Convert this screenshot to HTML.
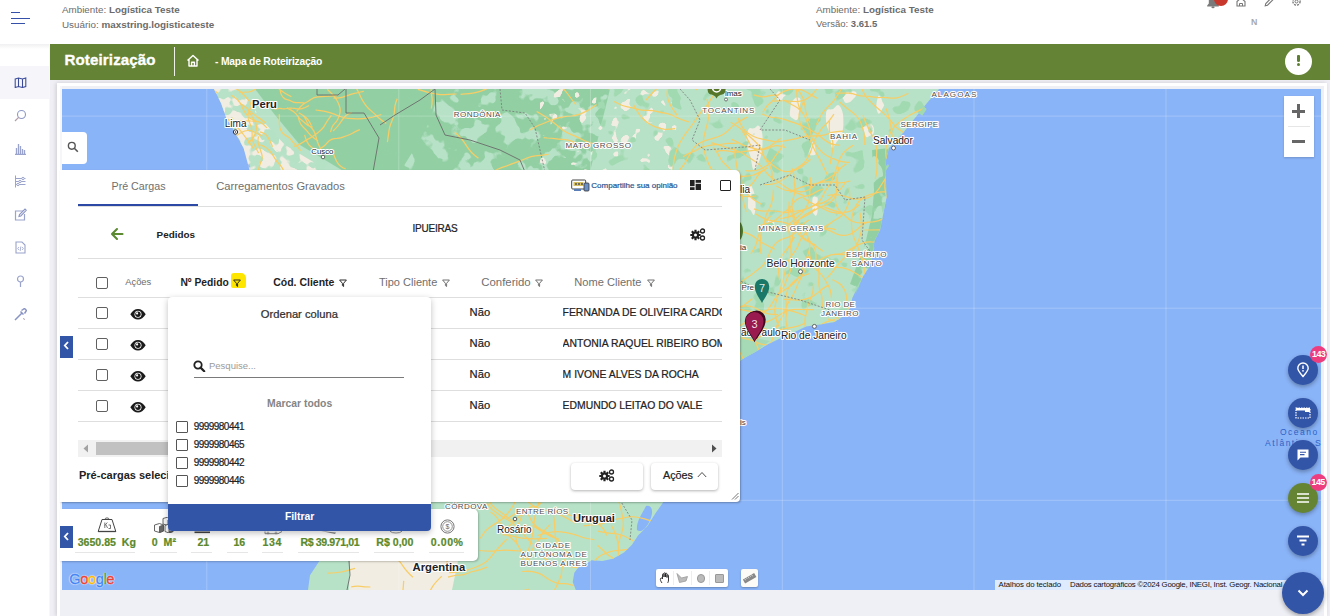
<!DOCTYPE html>
<html><head><meta charset="utf-8">
<style>
*{box-sizing:border-box;margin:0;padding:0}
html,body{width:1330px;height:616px;overflow:hidden;background:#fff;font-family:"Liberation Sans",sans-serif;position:relative}
.a{position:absolute}
.t{position:absolute;white-space:nowrap;line-height:1.15}
.b{font-weight:bold}
.hv{-webkit-text-stroke:0.22px #222}
</style></head><body>

<!-- HEADER -->
<div class="a" style="left:0;top:0;width:1330px;height:44px;background:#fff"></div>
<div class="a" style="left:11px;top:12px;width:9px;height:1.3px;background:#3450a8"></div>
<div class="a" style="left:11px;top:18px;width:19px;height:1.3px;background:#3450a8"></div>
<div class="a" style="left:11px;top:23px;width:14px;height:1.3px;background:#3450a8"></div>
<div class="t" style="left:62px;top:3.8px;font-size:9.82px;color:#6b6b6b">Ambiente: <b>Logística Teste</b></div>
<div class="t" style="left:62px;top:18.8px;font-size:9.87px;color:#6b6b6b">Usuário: <b>maxstring.logisticateste</b></div>
<div class="t" style="left:816px;top:3.8px;font-size:9.82px;color:#6b6b6b">Ambiente: <b>Logística Teste</b></div>
<div class="t" style="left:816px;top:18.8px;font-size:9.5px;color:#6b6b6b">Versão: <b>3.61.5</b></div>

<!-- SIDEBAR -->
<div class="a" style="left:0;top:44px;width:49px;height:572px;background:#fff"></div>
<div class="a" style="left:0;top:66px;width:49px;height:33px;background:#f5f5fa"></div>
<div class="a" style="left:0;top:44px;width:49px;height:5px;background:linear-gradient(#f0f0f2,#fff)"></div>
<div class="a" style="left:49px;top:44px;width:1px;height:572px;background:#f7f7f9"></div>

<!-- GREEN BAR -->
<div class="a" style="left:50px;top:44px;width:1280px;height:36px;background:#658335"></div>
<div class="t b" style="left:64.5px;top:50.8px;font-size:15.1px;letter-spacing:0.12px;color:#fff;-webkit-text-stroke:0.35px #fff">Roteirização</div>
<div class="a" style="left:174.2px;top:47px;width:1.2px;height:29px;background:#eef2e6"></div>
<div class="t b" style="left:215px;top:55.8px;font-size:10.3px;letter-spacing:-0.2px;color:#fff">- Mapa de Roteirização</div>

<!-- CONTENT BG -->
<div class="a" style="left:50px;top:80px;width:1280px;height:536px;background:#efeff5"></div>
<div class="a" style="left:57px;top:83px;width:1270px;height:533px;background:#fff;box-shadow:-1px 0 4px rgba(0,0,0,.15)"></div>
<div class="a" style="left:60px;top:86px;width:1264px;height:530px;background:#eff0f6"></div>
<div class="a" style="left:60px;top:86px;width:2px;height:504px;background:#f6f6f9"></div>

<!-- MAP -->
<div id="map" class="a" style="left:62px;top:89px;width:1259px;height:501px;background:#8ab4f8;overflow:hidden"><svg width="1259" height="501" viewBox="62 89 1259 501"><defs>
<filter id="nz1" color-interpolation-filters="sRGB" x="0" y="0" width="100%" height="100%" filterUnits="userSpaceOnUse"><feTurbulence type="fractalNoise" baseFrequency="0.05" numOctaves="3" seed="7" result="n"/><feColorMatrix in="n" type="matrix" values="0 0 0 0 0.573  0 0 0 0 0.816  0 0 0 0 0.639  18 0 0 0 -7.4" result="m"/><feComposite in="m" in2="SourceGraphic" operator="in"/></filter>
<filter id="nz2" color-interpolation-filters="sRGB" x="0" y="0" width="100%" height="100%" filterUnits="userSpaceOnUse"><feTurbulence type="fractalNoise" baseFrequency="0.09" numOctaves="2" seed="11" result="n"/><feColorMatrix in="n" type="matrix" values="0 0 0 0 0.949  0 0 0 0 0.929  0 0 0 0 0.886  24 0 0 0 -15.6" result="m"/><feComposite in="m" in2="SourceGraphic" operator="in"/></filter>
<filter id="nz3" color-interpolation-filters="sRGB" x="0" y="0" width="100%" height="100%" filterUnits="userSpaceOnUse"><feTurbulence type="fractalNoise" baseFrequency="0.07" numOctaves="2" seed="23" result="n"/><feColorMatrix in="n" type="matrix" values="0 0 0 0 0.71  0 0 0 0 0.882  0 0 0 0 0.77  18 0 0 0 -9.6" result="m"/><feComposite in="m" in2="SourceGraphic" operator="in"/></filter>
<filter id="nz4" color-interpolation-filters="sRGB" x="0" y="0" width="100%" height="100%" filterUnits="userSpaceOnUse"><feTurbulence type="fractalNoise" baseFrequency="0.06" numOctaves="2" seed="5" result="n"/><feColorMatrix in="n" type="matrix" values="0 0 0 0 0.63  0 0 0 0 0.85  0 0 0 0 0.69  18 0 0 0 -11.3" result="m"/><feComposite in="m" in2="SourceGraphic" operator="in"/></filter>
<filter id="nz5" color-interpolation-filters="sRGB" x="0" y="0" width="100%" height="100%" filterUnits="userSpaceOnUse"><feTurbulence type="fractalNoise" baseFrequency="0.08" numOctaves="2" seed="31" result="n"/><feColorMatrix in="n" type="matrix" values="0 0 0 0 0.949  0 0 0 0 0.929  0 0 0 0 0.886  16 0 0 0 -7.2" result="m"/><feComposite in="m" in2="SourceGraphic" operator="in"/></filter>
</defs>
<polygon id="landpoly" points="214.0,89.0 939.0,89.0 927.0,103.0 915.0,118.0 903.0,133.0 889.0,148.0 886.0,160.0 885.6,172.0 885.7,181.0 886.5,197.5 883.3,213.7 880.0,230.0 874.4,241.0 872.7,254.0 870.0,265.7 863.0,276.4 857.6,287.0 852.3,298.0 850.0,308.0 841.6,317.5 834.4,322.0 820.0,324.6 806.0,326.4 791.6,333.6 779.0,339.0 768.4,344.0 756.0,351.4 743.4,358.6 730.0,368.0 712.0,392.0 700.0,420.0 690.0,460.0 672.0,495.0 663.0,502.4 655.3,513.6 647.5,526.0 638.0,535.4 632.0,544.7 624.0,552.5 613.0,558.7 602.3,561.0 591.4,560.3 586.7,563.4 579.0,566.5 574.3,572.8 572.7,582.0 575.8,590.0 308.0,590.0 310.0,575.3 319.2,561.3 326.0,520.0 322.0,470.0 300.0,330.0 262.0,200.0 250.4,169.0 248.9,163.0 243.6,148.0 235.3,133.0 226.3,118.0 221.0,103.0" fill="#b7e2c7"/>
<polygon points="214.0,89.0 240.0,89.0 262.0,120.0 285.0,145.0 330.0,172.0 250.0,172.0 243.6,148.0 235.3,133.0 226.3,118.0 221.0,103.0" fill="#f2ede2" filter="url(#nz5)"/>
<polygon points="232.0,89.0 255.0,89.0 275.0,115.0 300.0,140.0 335.0,160.0 350.0,172.0 320.0,172.0 290.0,160.0 262.0,140.0 245.0,115.0" fill="#a6dab6" filter="url(#nz3)" />
<polygon points="255.0,89.0 440.0,89.0 430.0,120.0 420.0,140.0 400.0,172.0 345.0,172.0 300.0,145.0 275.0,115.0" fill="#92d0a3"/>
<polygon points="380.0,89.0 610.0,89.0 600.0,130.0 590.0,172.0 378.0,172.0" fill="#92d0a3" filter="url(#nz1)"/>
<polygon points="540.0,89.0 680.0,89.0 672.0,172.0 540.0,172.0" fill="#f2ede2" filter="url(#nz2)"/>
<path d="M842.7,130.9 Q841.6,136.8 839.4,138.7 Q837.1,140.6 834.3,146.0 Q831.5,151.3 830.9,142.4 Q830.2,133.5 828.1,129.2 Q826.0,125.0 825.8,116.7 Q825.7,108.5 829.4,109.3 Q833.0,110.2 835.5,106.7 Q837.9,103.3 840.4,107.1 Q842.9,111.0 843.3,118.0 Q843.8,125.0 842.7,130.9z" fill="#f2ede2"/>
<path d="M799.3,111.2 Q799.4,114.5 798.3,117.7 Q797.1,121.0 795.2,120.0 Q793.2,119.0 791.3,117.6 Q789.4,116.2 789.9,112.1 Q790.4,108.0 790.7,105.1 Q791.0,102.2 792.3,101.0 Q793.7,99.7 795.3,98.1 Q796.9,96.5 799.1,97.7 Q801.3,98.9 800.2,103.4 Q799.1,108.0 799.3,111.2z" fill="#f2ede2"/>
<path d="M874.1,131.2 Q873.8,134.3 871.7,135.1 Q869.7,135.9 867.8,136.9 Q865.8,138.0 865.2,134.9 Q864.5,131.8 863.7,129.9 Q862.9,128.0 862.7,125.0 Q862.6,122.1 864.2,120.1 Q865.9,118.1 867.8,119.0 Q869.8,119.9 870.6,122.1 Q871.5,124.2 872.9,126.1 Q874.4,128.0 874.1,131.2z" fill="#f2ede2"/>
<path d="M761.9,150.6 Q761.2,156.2 759.6,160.3 Q758.1,164.3 755.5,168.5 Q753.0,172.8 751.9,164.5 Q750.9,156.1 748.4,150.6 Q745.8,145.0 746.8,136.1 Q747.8,127.1 751.1,128.2 Q754.3,129.3 756.3,126.7 Q758.3,124.1 760.3,127.5 Q762.4,131.0 762.6,138.0 Q762.7,145.0 761.9,150.6z" fill="#f2ede2"/>
<path d="M755.6,203.9 Q755.8,207.8 754.9,212.4 Q754.0,217.1 752.4,213.4 Q750.9,209.7 749.3,209.2 Q747.7,208.8 748.0,204.4 Q748.3,200.0 748.0,195.7 Q747.7,191.3 748.9,187.2 Q750.0,183.0 751.6,186.2 Q753.2,189.5 753.9,192.0 Q754.7,194.6 755.0,197.3 Q755.3,200.0 755.6,203.9z" fill="#f2ede2"/>
<path d="M815.8,152.4 Q816.2,154.8 814.6,154.9 Q813.0,155.0 812.0,155.2 Q810.9,155.4 809.4,155.0 Q808.0,154.7 806.7,152.3 Q805.5,150.0 806.9,147.8 Q808.2,145.6 809.4,144.2 Q810.6,142.9 812.1,142.3 Q813.7,141.7 814.3,144.1 Q814.9,146.6 815.2,148.3 Q815.5,150.0 815.8,152.4z" fill="#f2ede2"/>
<path d="M854.7,97.4 Q853.0,98.7 851.8,100.4 Q850.7,102.1 847.7,102.8 Q844.7,103.5 844.1,101.0 Q843.5,98.4 841.6,97.2 Q839.7,96.0 840.4,94.1 Q841.0,92.2 843.6,92.0 Q846.1,91.7 848.1,91.5 Q850.1,91.2 853.4,91.2 Q856.7,91.3 856.6,93.6 Q856.4,96.0 854.7,97.4z" fill="#f2ede2"/>
<path d="M784.9,96.1 Q783.0,97.2 782.4,98.8 Q781.8,100.4 779.9,100.8 Q778.0,101.3 777.3,99.3 Q776.7,97.4 775.7,96.2 Q774.6,95.0 775.9,94.0 Q777.2,93.0 777.9,91.8 Q778.6,90.7 780.2,90.2 Q781.7,89.7 783.0,90.8 Q784.3,91.9 785.5,93.4 Q786.7,95.0 784.9,96.1z" fill="#f2ede2"/>
<path d="M883.5,106.7 Q882.3,108.3 881.7,110.1 Q881.1,111.8 879.8,113.2 Q878.4,114.5 877.5,112.3 Q876.6,110.0 876.4,107.5 Q876.1,105.0 876.6,102.8 Q877.0,100.6 877.7,97.7 Q878.3,94.8 879.8,95.9 Q881.3,97.0 881.7,99.4 Q882.1,101.9 883.5,103.4 Q884.8,105.0 883.5,106.7z" fill="#f2ede2"/>
<path d="M773.8,226.6 Q772.8,228.1 772.0,229.3 Q771.2,230.4 770.1,230.0 Q769.0,229.6 768.0,229.0 Q766.9,228.4 766.7,226.7 Q766.5,225.0 767.1,223.7 Q767.7,222.5 768.2,220.6 Q768.7,218.8 769.8,219.8 Q770.9,220.9 772.4,220.8 Q773.9,220.8 774.4,222.9 Q774.8,225.0 773.8,226.6z" fill="#f2ede2"/>
<path d="M817.5,208.5 Q817.9,212.0 817.0,214.3 Q816.1,216.6 815.1,215.5 Q814.1,214.5 813.1,213.1 Q812.2,211.7 812.4,208.4 Q812.5,205.0 812.3,201.6 Q812.2,198.1 813.1,197.1 Q814.1,196.0 814.9,196.6 Q815.8,197.3 817.0,197.2 Q818.2,197.2 817.6,201.1 Q817.0,205.0 817.5,208.5z" fill="#f2ede2"/>
<polygon points="600.0,89.0 740.0,89.0 740.0,172.0 590.0,172.0" fill="#a6dab6" filter="url(#nz4)"/>
<polygon points="740.0,89.0 940.0,89.0 885.0,172.0 740.0,172.0" fill="#a6dab6" filter="url(#nz4)"/>
<polygon points="740.0,172.0 886.0,172.0 886.5,197.5 880.0,230.0 872.7,254.0 863.0,276.4 850.0,308.0 834.0,322.0 791.0,333.0 756.0,351.0 740.0,360.0" fill="#a6dab6" filter="url(#nz4)"/>
<polygon points="740.0,335.0 770.0,341.0 756.0,351.4 743.4,358.6 738.0,362.0" fill="#a6dab6"/>
<polygon points="872.0,150.0 889.0,148.0 886.0,160.0 885.6,172.0 886.5,197.5 883.3,213.7 880.0,230.0 874.4,241.0 872.7,254.0 870.0,265.7 863.0,276.4 857.0,287.0 850.0,284.0 858.0,262.0 866.0,240.0 872.0,215.0 874.0,190.0" fill="#92d0a3" filter="url(#nz1)"/>
<polygon points="319.2,561.3 350.0,561.0 349.0,590.0 308.0,590.0 310.0,575.3" fill="#a6dab6" filter="url(#nz4)"/>
<polygon points="350.0,561.0 458.0,561.0 452.0,590.0 349.0,590.0" fill="#f2ede2"/>
<polygon points="380.0,561.0 458.0,561.0 452.0,590.0 380.0,590.0" fill="#b7e2c7" filter="url(#nz3)"/>
<polygon points="478.0,502.0 663.0,502.0 624.0,552.0 574.0,575.0 572.0,590.0 478.0,590.0" fill="#a6dab6" filter="url(#nz4)"/>
<path d="M646,506 C652,504 654,512 650,520 C646,530 640,533 637,530 C636,522 642,514 646,506z" fill="#8ab4f8"/>
<clipPath id="landclip"><use href="#landpoly"/></clipPath><path d="M835.2,174.9 Q836.5,181.3 836.4,184.6 Q836.4,187.9 836.2,191.1 Q836.0,194.4 835.6,197.7 Q835.1,200.9 836.0,204.1 Q836.9,207.2 838.9,209.8 Q840.9,212.4 843.5,214.5 Q846.0,216.6 848.3,218.8 L850.7,221.1 M823.3,309.6 Q821.8,302.9 822.0,299.5 Q822.1,296.0 820.8,292.9 Q819.5,289.7 819.1,286.3 Q818.7,282.8 818.9,279.4 Q819.1,276.0 818.9,272.5 Q818.6,269.1 817.3,265.9 Q816.0,262.8 816.0,259.3 Q816.1,255.9 815.7,252.5 Q815.2,249.1 813.6,246.0 Q812.0,243.0 809.4,240.7 L806.8,238.5 M866.8,287.7 Q872.6,282.0 875.1,278.8 Q877.7,275.6 880.4,272.6 Q883.1,269.5 886.5,267.4 Q890.0,265.2 893.7,263.5 Q897.3,261.7 901.4,261.2 Q905.4,260.7 909.5,260.5 Q913.6,260.3 917.6,260.9 Q921.6,261.4 925.5,260.3 Q929.5,259.2 933.0,257.2 Q936.5,255.2 939.6,252.5 Q942.7,249.9 944.6,246.3 L946.5,242.6 M773.4,189.7 Q773.1,196.3 772.4,199.6 Q771.8,202.9 770.5,205.9 Q769.3,209.0 767.6,211.9 Q765.8,214.7 765.3,218.0 Q764.8,221.3 763.9,224.5 Q762.9,227.7 761.9,230.8 Q760.9,234.0 760.6,237.3 Q760.4,240.6 760.2,244.0 Q760.0,247.3 760.6,250.6 L761.1,253.8 M878.7,304.2 Q878.1,313.5 879.0,318.2 Q879.9,322.8 882.5,326.6 Q885.2,330.5 888.5,333.8 Q891.8,337.2 895.7,339.8 Q899.6,342.4 904.0,343.9 Q908.4,345.4 911.9,348.5 Q915.4,351.6 917.7,355.7 Q920.0,359.8 922.9,363.5 Q925.8,367.1 928.2,371.2 L930.6,375.2 M798.1,348.3 Q791.6,348.6 788.3,348.6 Q785.0,348.6 781.8,347.9 Q778.6,347.2 775.4,346.7 Q772.1,346.2 768.9,345.4 Q765.8,344.7 762.5,344.3 Q759.2,344.0 756.4,342.3 Q753.7,340.5 750.5,339.8 Q747.3,339.0 744.1,338.3 L740.9,337.6 M852.9,337.9 Q858.6,345.0 862.7,347.2 Q866.7,349.4 870.9,351.2 Q875.2,352.9 878.2,356.3 Q881.3,359.7 884.3,363.2 Q887.3,366.7 888.6,371.1 Q889.8,375.5 889.6,380.1 L889.5,384.7 M739.7,310.5 Q738.1,301.7 736.6,297.4 Q735.1,293.2 732.9,289.3 Q730.7,285.4 727.4,282.3 Q724.1,279.2 719.8,277.9 Q715.5,276.6 711.5,274.4 Q707.6,272.3 704.1,269.4 Q700.7,266.5 698.7,262.5 Q696.8,258.4 695.8,254.0 Q694.8,249.6 693.9,245.2 Q693.0,240.8 690.6,237.0 Q688.2,233.2 686.3,229.1 Q684.3,225.0 683.7,220.6 L683.0,216.1 M815.2,208.8 Q808.2,213.0 804.6,215.0 Q801.1,217.0 798.7,220.4 Q796.4,223.7 794.6,227.4 Q792.9,231.1 792.8,235.1 Q792.7,239.2 791.1,243.0 Q789.5,246.7 786.8,249.7 L784.0,252.7 M864.4,230.0 Q874.2,229.9 879.1,229.8 Q884.0,229.7 888.5,227.7 Q893.0,225.8 897.8,224.9 Q902.6,224.1 907.5,224.4 Q912.4,224.7 917.1,223.4 Q921.8,222.1 926.5,220.7 Q931.2,219.3 935.9,218.1 Q940.7,216.9 945.1,214.7 Q949.4,212.5 954.3,211.9 Q959.2,211.3 964.0,210.4 Q968.8,209.5 973.2,207.3 Q977.6,205.2 982.0,203.2 Q986.5,201.2 991.3,200.2 L996.1,199.2 M768.6,230.8 Q776.3,230.7 780.0,229.3 Q783.6,228.0 786.8,225.8 Q790.0,223.6 792.8,220.9 Q795.7,218.3 798.7,215.9 Q801.7,213.5 804.1,210.4 Q806.5,207.3 808.0,203.8 Q809.5,200.2 809.6,196.3 Q809.7,192.5 810.2,188.6 Q810.8,184.8 810.4,180.9 L809.9,177.1 M875.6,337.6 Q882.1,340.6 885.3,342.2 Q888.4,343.8 891.2,346.0 Q894.0,348.2 895.9,351.2 Q897.8,354.3 899.5,357.4 Q901.1,360.5 903.5,363.2 Q905.8,365.9 908.2,368.5 Q910.7,371.1 913.3,373.5 L915.9,375.9 M752.3,298.5 Q746.4,303.6 743.0,305.7 Q739.7,307.8 735.8,308.2 Q731.9,308.7 728.4,310.5 Q724.9,312.3 721.6,314.4 Q718.2,316.5 715.3,319.1 Q712.3,321.7 708.6,323.1 Q705.0,324.6 701.8,326.9 Q698.5,329.1 696.1,332.2 Q693.6,335.3 691.3,338.4 Q688.9,341.6 686.8,344.9 L684.7,348.3 M780.3,218.7 Q789.5,217.2 793.4,214.9 Q797.4,212.6 801.7,210.9 Q806.0,209.1 810.3,207.5 Q814.7,206.0 817.9,202.7 Q821.2,199.4 823.1,195.2 Q824.9,191.0 827.7,187.3 Q830.5,183.6 832.3,179.4 Q834.2,175.1 835.6,170.8 Q837.1,166.4 838.5,162.0 Q839.9,157.6 842.6,153.9 Q845.4,150.2 849.3,147.7 L853.1,145.2 M763.0,170.4 Q756.8,173.9 753.4,175.0 Q750.0,176.1 746.4,176.2 Q742.9,176.4 739.3,176.1 Q735.7,175.7 732.2,175.4 Q728.6,175.1 725.1,175.8 Q721.6,176.5 718.4,178.0 Q715.2,179.6 712.8,182.3 Q710.5,184.9 707.6,187.0 Q704.7,189.2 702.9,192.2 Q701.0,195.3 699.7,198.6 Q698.4,201.9 698.5,205.5 L698.6,209.1 M810.5,349.3 Q800.8,351.1 796.4,353.3 Q792.0,355.5 787.4,357.3 Q782.9,359.1 778.1,360.2 Q773.2,361.3 768.8,363.5 L764.4,365.7 M756.2,343.6 Q758.6,349.3 759.4,352.3 Q760.2,355.2 760.8,358.3 Q761.4,361.3 762.5,364.1 Q763.6,367.0 765.3,369.6 Q767.0,372.2 768.3,375.0 Q769.5,377.8 771.3,380.3 Q773.0,382.9 775.2,385.0 Q777.4,387.1 780.2,388.4 Q783.0,389.7 785.6,391.4 Q788.2,393.0 790.9,394.6 Q793.6,396.1 795.4,398.5 Q797.3,401.0 798.1,403.9 Q799.0,406.9 801.0,409.3 L803.0,411.6 M832.4,279.8 Q838.7,282.6 841.1,285.0 Q843.4,287.5 844.8,290.6 Q846.2,293.8 846.5,297.2 Q846.8,300.6 847.4,304.0 Q848.1,307.3 849.8,310.3 Q851.4,313.3 852.1,316.7 Q852.8,320.0 852.9,323.4 Q853.0,326.9 852.7,330.3 Q852.4,333.7 850.7,336.7 Q849.0,339.7 847.0,342.4 Q844.9,345.1 844.1,348.4 Q843.4,351.8 841.8,354.8 L840.1,357.8 M783.5,299.4 Q790.6,299.1 794.0,299.8 Q797.5,300.4 801.0,300.0 Q804.5,299.5 807.8,298.4 Q811.2,297.3 814.1,295.4 Q817.1,293.4 819.7,291.1 Q822.4,288.8 825.4,286.9 L828.4,285.1 M867.6,268.6 Q868.0,274.9 868.9,278.0 Q869.7,281.1 871.8,283.5 Q873.8,285.9 875.3,288.7 Q876.7,291.6 877.8,294.6 L878.8,297.6 M777.8,314.5 Q769.6,314.7 765.7,313.2 Q761.9,311.7 758.4,309.6 Q754.9,307.4 750.9,306.5 Q746.8,305.5 742.8,306.3 Q738.7,307.0 734.8,308.3 Q730.9,309.5 726.9,310.6 Q722.9,311.6 719.0,312.9 Q715.1,314.2 712.0,316.9 Q708.9,319.7 706.2,322.8 Q703.5,325.9 699.8,327.7 L696.1,329.6 M885.8,177.8 Q881.3,185.2 878.8,188.8 Q876.4,192.3 872.9,194.9 Q869.4,197.5 865.2,198.4 Q860.9,199.3 856.6,199.2 Q852.3,199.1 848.3,197.4 Q844.3,195.7 840.0,195.0 Q835.7,194.3 831.4,194.9 L827.1,195.5 M859.6,204.5 Q852.8,210.3 848.5,211.7 Q844.2,213.1 839.8,213.3 Q835.3,213.4 831.0,212.2 Q826.7,210.9 822.9,208.5 Q819.2,206.1 815.0,204.6 Q810.8,203.0 807.1,200.5 L803.5,197.9 M754.4,340.1 Q760.4,336.7 763.1,334.7 Q765.8,332.6 769.0,331.5 Q772.1,330.3 775.5,330.2 Q778.9,330.1 782.2,329.2 Q785.5,328.3 788.9,327.8 Q792.2,327.4 795.5,326.6 Q798.9,325.9 802.0,324.5 L805.1,323.1 M748.6,320.8 Q741.9,324.5 738.5,326.2 Q735.1,327.9 731.3,328.2 Q727.5,328.5 724.1,330.0 Q720.6,331.6 716.8,331.6 Q713.0,331.5 709.4,332.6 Q705.7,333.7 701.9,333.2 Q698.2,332.7 694.4,333.0 Q690.6,333.3 687.2,334.9 Q683.7,336.5 680.4,338.3 Q677.0,340.1 673.4,341.2 Q669.7,342.3 666.3,343.9 Q662.9,345.6 659.3,346.9 L655.8,348.3 M815.7,245.1 Q810.1,242.6 807.3,241.3 Q804.5,239.9 802.2,237.9 Q799.9,235.9 797.9,233.5 Q796.0,231.1 795.1,228.1 Q794.2,225.2 794.0,222.1 Q793.7,219.0 792.7,216.1 Q791.6,213.2 790.4,210.4 Q789.2,207.5 789.1,204.4 L789.1,201.4 M878.0,291.5 Q872.1,284.9 868.6,282.1 Q865.1,279.3 861.5,276.8 Q857.8,274.4 853.9,272.2 Q850.0,270.1 845.8,268.7 Q841.6,267.3 837.1,267.3 L832.7,267.4 M801.9,353.4 Q796.9,346.6 794.5,343.1 Q792.2,339.5 788.5,337.4 Q784.8,335.3 780.9,333.9 Q776.9,332.5 772.8,331.3 Q768.7,330.2 764.7,328.8 Q760.8,327.3 757.0,325.4 L753.3,323.4 M808.7,256.2 Q807.0,265.2 805.2,269.5 Q803.4,273.7 801.1,277.6 Q798.7,281.6 797.1,285.9 Q795.6,290.2 793.4,294.2 Q791.2,298.3 788.6,302.1 Q786.0,305.8 785.0,310.3 Q783.9,314.8 781.2,318.4 Q778.4,322.1 776.6,326.3 Q774.8,330.5 773.7,335.0 Q772.7,339.5 770.5,343.5 Q768.2,347.5 767.3,352.0 L766.5,356.5 M745.0,361.9 Q741.1,355.1 739.4,351.6 Q737.7,348.1 736.7,344.3 Q735.7,340.5 734.3,336.9 Q732.9,333.2 731.2,329.7 Q729.4,326.2 726.7,323.4 L724.0,320.6 M842.5,344.1 Q846.4,335.8 849.4,332.4 Q852.4,328.9 855.9,326.1 Q859.5,323.2 862.9,320.2 Q866.4,317.3 870.0,314.5 Q873.6,311.7 877.9,310.4 L882.3,309.1 M756.4,196.0 Q746.6,197.4 741.8,196.0 Q737.0,194.7 732.9,191.8 Q728.9,188.9 725.2,185.6 Q721.4,182.3 718.4,178.4 Q715.4,174.4 712.4,170.5 Q709.4,166.5 707.7,161.8 Q706.0,157.1 704.5,152.4 Q703.0,147.6 703.3,142.7 Q703.5,137.7 704.8,132.9 Q706.2,128.1 707.4,123.3 Q708.6,118.5 708.8,113.5 Q708.9,108.5 708.0,103.6 L707.0,98.8 M834.9,319.3 Q828.0,321.1 824.8,322.6 Q821.6,324.1 818.8,326.2 Q815.9,328.4 813.5,330.9 Q811.0,333.5 808.5,335.9 Q805.9,338.4 804.3,341.6 Q802.7,344.7 801.9,348.2 Q801.1,351.6 799.7,354.9 L798.3,358.2 M845.4,182.5 Q841.0,189.0 837.9,191.5 Q834.8,193.9 832.0,196.7 Q829.2,199.4 825.8,201.4 Q822.4,203.4 818.5,203.9 Q814.6,204.5 811.3,206.5 Q808.0,208.6 804.1,209.5 Q800.3,210.4 796.4,211.0 Q792.5,211.5 788.7,212.2 Q784.8,212.9 780.9,212.0 Q777.1,211.1 773.2,211.0 Q769.3,210.8 765.3,211.0 Q761.4,211.2 757.6,210.1 L753.9,208.9 M865.0,275.0 Q864.0,265.4 862.5,260.9 Q861.1,256.3 859.5,251.7 Q858.0,247.2 856.0,242.8 Q854.1,238.5 852.8,233.8 Q851.5,229.2 851.5,224.4 Q851.4,219.6 852.4,214.9 Q853.3,210.2 855.6,206.0 Q858.0,201.8 861.7,198.8 Q865.4,195.7 870.0,194.5 Q874.6,193.3 879.3,192.2 Q884.0,191.1 888.7,191.8 Q893.5,192.5 898.2,193.6 Q902.8,194.6 907.3,196.3 L911.8,198.1 M750.8,253.6 Q754.4,248.6 755.5,245.7 Q756.6,242.8 757.3,239.7 Q757.9,236.7 759.2,233.9 Q760.6,231.1 761.6,228.2 Q762.6,225.2 764.3,222.6 Q765.9,220.0 768.3,218.0 L770.6,216.0 M776.3,186.0 Q781.7,189.1 784.7,190.0 Q787.7,190.8 790.8,190.5 Q793.8,190.2 796.8,191.1 Q799.8,192.0 802.9,191.7 Q805.9,191.3 808.6,189.7 Q811.3,188.2 813.5,186.0 Q815.8,183.9 818.6,182.5 Q821.4,181.2 824.3,180.1 Q827.2,179.1 829.8,177.4 Q832.4,175.7 835.0,173.9 Q837.5,172.1 839.3,169.6 Q841.1,167.1 843.8,165.5 L846.4,163.9 M808.7,220.0 Q801.7,224.7 799.3,228.2 Q796.8,231.6 793.5,234.2 Q790.2,236.7 786.1,237.8 Q782.0,238.8 778.5,241.1 Q775.0,243.5 772.8,247.1 Q770.6,250.7 769.0,254.6 Q767.5,258.5 765.3,262.1 Q763.1,265.7 759.7,268.2 Q756.3,270.6 753.1,273.4 Q749.9,276.1 746.2,278.2 Q742.6,280.3 739.9,283.6 Q737.3,286.9 734.2,289.7 Q731.0,292.5 727.6,294.9 L724.1,297.4 M753.5,320.6 Q760.7,314.9 764.5,312.2 Q768.2,309.6 770.6,305.6 Q773.0,301.7 775.5,297.8 Q778.0,293.9 781.0,290.4 Q784.1,287.0 785.6,282.6 Q787.0,278.2 789.1,274.1 Q791.2,270.0 791.3,265.4 Q791.4,260.8 791.2,256.2 Q790.9,251.6 790.7,247.0 Q790.4,242.4 789.9,237.8 Q789.4,233.2 788.3,228.7 Q787.2,224.2 787.7,219.7 Q788.2,215.1 788.5,210.5 L788.9,205.9 M761.3,204.3 Q753.9,200.2 750.8,197.3 Q747.8,194.3 744.6,191.5 Q741.5,188.7 739.2,185.1 Q737.0,181.5 735.1,177.7 Q733.3,173.9 730.8,170.5 Q728.3,167.0 725.1,164.3 Q721.9,161.5 720.0,157.7 Q718.2,153.9 715.6,150.6 L713.0,147.2 M806.5,316.3 Q799.9,313.3 796.3,312.3 Q792.8,311.3 789.2,310.3 Q785.7,309.3 782.1,308.8 Q778.4,308.3 774.8,308.6 Q771.1,309.0 767.6,310.0 Q764.0,311.0 760.4,311.7 Q756.8,312.4 753.2,311.9 Q749.6,311.3 746.0,310.6 Q742.4,309.9 738.8,309.1 Q735.2,308.3 731.5,308.6 L727.9,308.8 M774.7,249.3 Q766.9,245.2 763.0,243.2 Q759.1,241.3 755.8,238.3 Q752.6,235.4 748.5,233.8 Q744.4,232.2 740.1,231.7 Q735.7,231.2 731.5,230.0 Q727.3,228.7 723.0,228.2 Q718.6,227.7 714.3,226.9 L710.0,226.1 M809.9,273.5 Q802.9,275.6 799.7,277.3 Q796.5,279.0 793.7,281.5 Q790.9,283.9 789.1,287.0 Q787.3,290.2 786.5,293.8 Q785.6,297.3 786.0,301.0 Q786.4,304.6 786.6,308.3 Q786.9,311.9 786.3,315.5 Q785.7,319.2 786.2,322.8 Q786.6,326.4 787.9,329.8 Q789.3,333.2 790.7,336.6 Q792.1,340.0 792.7,343.6 Q793.4,347.2 792.6,350.8 L791.7,354.3 M817.7,225.2 Q824.0,228.7 827.4,229.8 Q830.8,231.0 834.0,232.8 Q837.1,234.5 840.6,235.2 Q844.1,235.8 847.6,235.0 Q851.1,234.2 854.0,232.1 Q856.9,229.9 859.4,227.3 Q861.9,224.7 865.1,223.2 L868.4,221.8 M835.0,316.8 Q841.7,321.6 845.2,323.8 Q848.7,326.0 852.7,327.2 Q856.7,328.3 860.8,327.8 Q864.9,327.3 868.9,328.4 L872.9,329.5 M810.6,330.3 Q803.2,334.0 800.2,336.9 Q797.2,339.8 793.5,341.7 Q789.9,343.7 785.7,344.0 Q781.6,344.4 777.9,346.2 Q774.1,348.0 770.9,350.7 L767.7,353.3 M822.8,251.2 Q817.2,247.1 814.3,245.2 Q811.5,243.3 808.5,241.6 Q805.5,239.9 803.2,237.3 Q800.9,234.7 800.0,231.3 Q799.1,228.0 797.5,224.9 Q796.0,221.8 794.9,218.6 Q793.7,215.3 792.9,212.0 Q792.0,208.6 791.9,205.2 Q791.8,201.7 793.1,198.5 Q794.4,195.3 794.7,191.9 Q795.1,188.4 794.6,185.0 Q794.1,181.6 794.1,178.2 Q794.1,174.7 793.0,171.4 L791.9,168.1 M764.4,184.6 Q773.2,184.5 777.2,182.7 Q781.1,180.9 784.7,178.3 Q788.3,175.8 791.2,172.6 Q794.2,169.4 798.1,167.3 Q802.0,165.3 804.8,161.9 Q807.5,158.5 809.5,154.6 Q811.4,150.6 812.4,146.4 Q813.4,142.1 815.5,138.3 Q817.7,134.4 820.1,130.8 Q822.5,127.1 825.8,124.3 Q829.1,121.4 831.5,117.7 L833.9,114.1 M755.4,213.8 Q763.4,218.7 767.9,219.9 Q772.4,221.0 777.0,221.4 Q781.7,221.7 786.1,223.1 Q790.6,224.5 794.9,226.1 Q799.3,227.8 803.8,228.6 Q808.4,229.4 813.0,228.6 Q817.6,227.8 822.3,227.9 Q826.9,227.9 831.5,228.7 L836.1,229.6 M881.3,267.6 Q873.3,265.0 869.7,262.9 Q866.0,260.8 862.6,258.4 Q859.2,256.0 855.1,255.2 Q850.9,254.4 846.7,254.6 Q842.6,254.9 838.4,254.4 L834.2,254.0 M868.8,284.5 Q876.6,287.5 880.7,287.8 Q884.8,288.1 889.0,288.5 Q893.1,288.9 897.3,289.0 Q901.4,289.2 905.5,288.5 Q909.6,287.9 913.6,289.0 Q917.6,290.2 921.6,291.2 Q925.7,292.1 929.3,294.1 Q932.9,296.2 935.4,299.5 L937.8,302.9 M809.4,249.6 Q806.7,258.7 804.6,262.9 Q802.5,267.1 801.2,271.6 Q799.9,276.1 796.9,279.8 Q794.0,283.5 790.1,286.2 Q786.2,288.9 782.3,291.4 L778.3,294.0 M807.1,231.3 Q800.7,238.2 799.3,242.7 Q797.8,247.3 795.0,251.1 Q792.2,254.9 789.5,258.8 Q786.9,262.7 785.9,267.3 Q785.0,271.9 783.9,276.6 Q782.9,281.2 781.4,285.6 Q779.9,290.1 778.4,294.6 Q776.8,299.1 775.6,303.6 Q774.3,308.2 774.9,312.9 Q775.5,317.6 777.1,322.0 L778.7,326.5 M757.9,226.2 Q764.1,224.1 767.2,223.4 Q770.4,222.7 773.3,221.2 Q776.2,219.8 778.5,217.5 Q780.9,215.3 783.3,213.1 Q785.7,211.0 788.3,209.0 Q790.8,207.0 792.4,204.2 Q794.1,201.4 796.8,199.5 Q799.5,197.7 802.6,197.0 Q805.8,196.3 808.9,195.4 Q812.0,194.6 814.7,192.7 Q817.4,190.9 820.5,189.9 L823.6,189.0 M813.8,309.7 Q806.1,309.4 802.3,309.4 Q798.4,309.3 794.6,309.4 Q790.8,309.5 787.2,310.8 Q783.6,312.1 780.4,314.3 Q777.3,316.5 774.0,318.5 Q770.7,320.4 767.1,321.6 Q763.4,322.8 760.4,325.1 Q757.3,327.3 755.3,330.6 L753.3,333.9 M855.4,336.6 Q854.6,343.6 853.5,347.0 Q852.4,350.3 850.3,353.2 Q848.3,356.1 846.0,358.8 Q843.7,361.5 841.1,363.9 Q838.5,366.2 835.2,367.6 Q832.0,369.0 828.8,370.5 Q825.6,372.1 822.4,373.6 Q819.3,375.2 816.4,377.3 Q813.5,379.3 810.2,380.6 Q806.9,381.9 803.8,383.6 Q800.7,385.2 797.2,385.6 Q793.7,385.9 790.2,385.1 L786.8,384.3 M887.1,216.6 Q881.7,219.6 878.8,220.6 Q875.9,221.6 872.8,221.8 Q869.7,221.9 866.6,222.4 Q863.6,222.9 860.5,222.9 Q857.4,222.9 854.5,222.0 Q851.5,221.2 849.2,219.1 Q846.8,217.1 844.5,215.1 Q842.2,213.1 839.2,212.2 Q836.3,211.3 833.3,210.4 Q830.3,209.5 827.5,208.3 L824.6,207.2 M870.2,340.5 Q863.6,347.5 861.5,351.8 Q859.5,356.2 856.1,359.6 Q852.7,363.1 848.2,364.9 Q843.7,366.6 840.2,369.9 Q836.7,373.2 832.5,375.6 Q828.3,377.9 824.7,381.1 Q821.0,384.2 817.1,387.0 Q813.1,389.7 809.4,392.8 Q805.7,395.9 803.4,400.1 Q801.1,404.4 799.5,408.9 Q797.9,413.5 795.6,417.7 Q793.3,421.9 790.8,426.1 L788.4,430.2 M883.0,292.2 Q887.1,283.7 887.4,278.9 Q887.7,274.2 888.5,269.5 Q889.3,264.8 891.8,260.8 Q894.3,256.8 898.3,254.2 Q902.3,251.7 906.8,250.1 Q911.2,248.4 915.6,246.6 Q920.0,244.7 923.4,241.4 Q926.8,238.1 930.6,235.2 Q934.4,232.4 938.9,230.9 Q943.4,229.5 947.8,227.8 Q952.3,226.1 956.9,225.2 L961.6,224.3 M875.3,179.0 Q877.0,171.7 877.0,168.0 Q877.0,164.3 876.7,160.6 Q876.4,156.9 876.7,153.2 Q877.0,149.5 876.2,145.8 Q875.5,142.2 873.7,138.9 Q871.9,135.7 870.5,132.2 Q869.0,128.8 867.2,125.6 Q865.4,122.3 864.2,118.8 L862.9,115.3 M813.6,283.7 Q813.3,291.5 811.8,295.2 Q810.3,298.8 808.9,302.4 Q807.5,306.1 806.8,310.0 Q806.1,313.8 805.3,317.6 Q804.5,321.5 805.1,325.3 Q805.8,329.2 804.9,333.0 Q803.9,336.8 801.5,339.9 Q799.1,343.0 797.2,346.4 L795.4,349.9 M884.2,304.6 Q877.9,307.1 874.8,308.4 Q871.6,309.7 868.9,311.7 Q866.1,313.7 863.2,315.5 Q860.4,317.3 857.4,318.9 Q854.4,320.5 851.0,320.7 Q847.6,320.9 844.3,321.7 Q841.0,322.5 837.6,321.8 Q834.3,321.1 831.1,320.0 L827.9,318.9 M779.7,280.4 Q778.0,270.9 778.5,266.1 Q779.1,261.3 781.3,257.0 Q783.5,252.7 786.7,249.1 Q790.0,245.5 792.2,241.3 L794.4,237.0 M859.9,212.7 Q861.4,221.3 861.6,225.6 Q861.7,230.0 860.6,234.2 Q859.4,238.4 857.8,242.4 Q856.1,246.5 853.2,249.6 Q850.2,252.8 846.8,255.6 Q843.5,258.4 840.6,261.7 Q837.8,265.0 835.1,268.4 Q832.5,271.9 829.6,275.2 L826.7,278.4 M849.3,187.6 Q849.6,194.3 849.7,197.6 Q849.7,201.0 848.4,204.0 Q847.0,207.1 845.6,210.1 Q844.2,213.2 841.7,215.5 Q839.3,217.8 836.3,219.3 Q833.3,220.8 830.7,222.9 Q828.1,225.0 825.0,226.3 Q821.9,227.5 818.8,228.8 Q815.7,230.2 812.4,230.6 Q809.1,231.0 805.7,230.7 L802.4,230.4 M789.5,192.5 Q797.5,188.3 801.8,186.9 Q806.0,185.4 810.5,184.7 Q814.9,184.0 819.3,182.8 Q823.7,181.7 828.2,181.9 Q832.7,182.2 837.1,182.6 Q841.6,183.1 846.0,182.0 L850.3,180.8 M798.0,221.6 Q803.2,228.5 805.5,232.2 Q807.8,235.9 809.0,240.1 Q810.1,244.3 809.6,248.6 Q809.1,252.9 810.1,257.1 Q811.0,261.4 813.0,265.2 Q815.0,269.1 818.4,271.8 Q821.8,274.5 824.0,278.2 Q826.3,281.9 828.4,285.8 Q830.4,289.6 831.0,293.9 L831.5,298.2 M771.6,182.3 Q772.7,173.8 771.4,169.7 Q770.2,165.6 767.4,162.3 Q764.6,159.0 763.5,154.9 Q762.4,150.7 760.0,147.2 Q757.5,143.6 754.3,140.8 Q751.1,137.9 748.0,135.0 Q744.9,132.0 741.5,129.4 Q738.1,126.7 734.4,124.5 L730.7,122.3 M882.3,305.8 Q873.4,306.3 868.9,306.9 Q864.5,307.5 860.5,309.7 Q856.6,311.8 852.7,314.0 Q848.7,316.2 845.0,318.6 Q841.3,321.1 836.9,321.9 Q832.4,322.8 828.7,325.3 Q825.1,327.8 821.7,330.8 Q818.3,333.7 815.1,336.9 Q811.9,340.0 807.7,341.6 Q803.5,343.2 799.0,343.4 Q794.5,343.6 790.4,345.3 Q786.3,347.1 781.9,348.2 Q777.6,349.2 773.2,350.1 L768.8,351.0 M886.6,239.9 Q877.0,242.2 872.1,242.0 Q867.2,241.7 862.5,243.2 Q857.8,244.7 853.6,247.4 Q849.5,250.1 845.0,252.2 Q840.6,254.3 835.6,254.4 Q830.7,254.5 826.2,256.6 Q821.7,258.6 817.6,261.3 L813.4,264.0 M937.2,154.3 Q940.7,160.2 941.4,163.5 Q942.1,166.9 943.3,170.1 Q944.5,173.3 946.6,175.9 Q948.8,178.6 949.8,181.8 Q950.9,185.1 953.2,187.6 Q955.6,190.0 957.0,193.1 Q958.5,196.2 960.9,198.7 Q963.2,201.1 966.2,202.7 Q969.3,204.3 972.6,205.1 Q975.9,206.0 979.3,205.9 Q982.7,205.7 986.1,206.1 L989.5,206.4 M696.4,90.2 Q694.9,82.0 693.3,78.2 Q691.7,74.3 688.9,71.2 Q686.1,68.1 683.1,65.2 Q680.1,62.3 676.3,60.6 Q672.5,58.9 668.3,58.8 Q664.1,58.6 659.9,58.7 L655.8,58.8 M780.5,138.3 Q773.1,144.7 768.7,146.8 Q764.3,149.0 759.5,149.6 Q754.6,150.2 749.8,150.8 Q744.9,151.3 740.1,152.0 Q735.2,152.7 730.5,151.4 Q725.8,150.1 721.0,150.7 L716.1,151.3 M809.7,122.3 Q805.9,114.4 805.5,110.0 Q805.1,105.6 803.9,101.3 Q802.8,97.0 800.5,93.3 Q798.1,89.5 794.6,86.8 Q791.1,84.1 787.9,81.0 Q784.8,77.9 781.9,74.5 Q779.0,71.2 776.8,67.4 Q774.5,63.6 771.9,60.0 Q769.3,56.4 767.0,52.6 Q764.7,48.9 761.7,45.6 L758.8,42.3 M816.4,124.7 Q820.1,116.1 823.0,112.3 Q825.8,108.6 829.3,105.4 Q832.8,102.3 835.5,98.4 Q838.1,94.5 840.5,90.5 L843.0,86.5 M747.1,117.1 Q739.1,121.1 735.5,123.7 Q731.9,126.3 729.0,129.7 Q726.0,133.1 722.0,135.0 Q718.0,136.9 713.7,138.1 Q709.4,139.3 705.1,140.6 Q700.9,141.9 697.4,144.6 Q693.8,147.4 691.6,151.2 Q689.3,155.1 687.3,159.0 Q685.3,163.0 682.4,166.5 L679.6,169.9 M783.2,99.8 Q790.3,104.0 794.0,105.8 Q797.7,107.6 800.6,110.5 Q803.5,113.4 805.1,117.2 Q806.7,121.0 808.5,124.7 Q810.3,128.4 810.6,132.5 Q811.0,136.6 812.9,140.3 Q814.8,143.9 817.4,147.1 Q820.0,150.4 823.1,153.1 Q826.2,155.8 830.0,157.3 Q833.9,158.8 837.7,160.3 Q841.6,161.8 845.7,162.1 L849.8,162.3 M810.5,159.3 Q804.9,164.2 801.9,166.4 Q798.9,168.6 795.4,169.9 Q791.9,171.3 788.1,171.5 Q784.4,171.7 780.9,170.3 Q777.5,168.9 774.5,166.6 Q771.6,164.3 768.9,161.7 Q766.2,159.2 763.8,156.2 Q761.5,153.3 758.2,151.7 Q754.8,150.0 752.4,147.2 Q749.9,144.3 748.4,140.9 Q746.9,137.5 744.6,134.5 L742.4,131.5 M735.1,147.3 Q734.5,154.7 735.4,158.3 Q736.2,161.9 736.6,165.6 Q736.9,169.3 738.6,172.5 Q740.4,175.8 741.3,179.4 Q742.3,183.0 741.7,186.6 Q741.1,190.3 741.9,193.9 Q742.7,197.5 743.4,201.2 Q744.0,204.8 745.1,208.4 L746.2,211.9 M803.4,102.1 Q799.5,110.3 799.1,114.8 Q798.8,119.4 800.3,123.7 Q801.7,128.0 804.4,131.6 Q807.1,135.3 809.4,139.2 Q811.7,143.2 813.4,147.4 Q815.1,151.6 817.6,155.4 Q820.0,159.3 822.0,163.4 Q823.9,167.5 825.8,171.6 L827.8,175.7 M800.5,111.7 Q798.2,104.7 797.6,101.0 Q797.0,97.4 796.8,93.7 Q796.5,90.0 796.3,86.3 Q796.1,82.6 795.3,79.0 L794.5,75.4 M745.1,170.7 Q752.3,171.3 755.8,170.5 Q759.3,169.6 762.5,168.0 Q765.8,166.4 768.7,164.3 Q771.6,162.2 773.4,159.1 Q775.2,155.9 777.6,153.2 Q780.0,150.6 781.5,147.3 L783.1,144.1 M785.1,147.4 Q779.1,145.4 776.0,145.6 Q772.8,145.9 770.1,147.5 Q767.4,149.0 764.3,149.5 Q761.1,149.9 758.1,149.3 Q755.0,148.7 751.9,147.9 Q748.9,147.1 745.9,146.1 Q742.9,145.2 740.2,143.6 Q737.4,142.1 734.6,140.8 L731.7,139.4 M718.8,90.7 Q711.8,96.9 709.7,101.0 Q707.5,105.2 704.2,108.5 Q700.9,111.8 698.5,115.7 Q696.0,119.7 693.2,123.5 Q690.4,127.2 687.6,130.9 Q684.7,134.6 682.3,138.5 Q679.8,142.5 678.0,146.8 Q676.2,151.1 675.0,155.6 Q673.9,160.1 673.4,164.8 Q673.0,169.4 673.9,174.0 L674.8,178.6 M817.6,98.5 Q811.0,95.1 808.0,93.0 Q804.9,90.9 801.4,89.8 Q797.9,88.8 794.2,89.0 Q790.5,89.3 786.9,90.3 Q783.4,91.4 780.3,93.4 Q777.2,95.4 774.9,98.3 Q772.5,101.2 769.6,103.5 Q766.7,105.8 764.8,109.0 L763.0,112.2 M927.8,141.1 Q919.2,140.1 914.9,139.0 Q910.7,138.0 907.3,135.2 Q903.9,132.5 900.2,130.3 Q896.4,128.1 893.8,124.5 Q891.3,121.0 888.2,117.9 Q885.1,114.8 881.9,111.9 Q878.6,109.0 875.3,106.2 Q871.9,103.4 869.0,100.2 Q866.0,97.0 864.0,93.2 Q861.9,89.3 860.2,85.3 L858.5,81.3 M778.0,95.2 Q771.8,94.8 768.8,95.8 Q765.9,96.8 762.7,96.8 Q759.6,96.7 756.7,95.7 L753.7,94.8 M843.8,131.1 Q833.9,131.3 829.5,133.3 Q825.0,135.4 820.1,135.7 Q815.2,136.0 810.3,136.0 Q805.4,136.0 800.7,137.4 Q796.0,138.7 791.2,139.6 Q786.3,140.5 781.5,141.4 Q776.7,142.3 771.9,141.2 Q767.1,140.1 762.3,139.2 Q757.5,138.3 753.1,136.2 Q748.7,134.0 745.1,130.6 Q741.6,127.2 739.8,122.6 L738.1,118.0 M711.1,142.6 Q720.7,145.3 725.3,147.0 Q730.0,148.8 734.8,150.0 Q739.7,151.2 743.7,154.1 Q747.8,157.0 752.1,159.5 Q756.4,162.0 760.0,165.4 Q763.6,168.9 766.6,172.9 Q769.6,176.8 773.9,179.3 Q778.2,181.8 782.2,184.8 Q786.2,187.8 790.6,190.1 Q795.0,192.5 799.7,194.2 L804.4,195.8 M829.5,121.1 Q828.9,128.4 829.7,132.0 Q830.6,135.5 831.9,138.9 Q833.2,142.4 833.0,146.0 Q832.9,149.7 832.0,153.3 Q831.2,156.8 830.7,160.5 L830.2,164.1 M838.8,166.9 Q836.9,175.2 837.4,179.5 Q837.9,183.7 837.6,188.0 Q837.3,192.3 835.4,196.1 Q833.4,199.9 830.0,202.5 Q826.6,205.1 822.5,206.3 Q818.4,207.5 815.0,210.1 Q811.5,212.7 807.8,214.7 Q804.0,216.8 800.2,218.8 Q796.4,220.8 793.8,224.2 L791.2,227.6 M767.2,167.9 Q761.4,171.5 759.2,174.0 Q757.0,176.6 755.3,179.5 Q753.6,182.4 751.1,184.8 Q748.7,187.1 746.3,189.5 Q743.9,191.9 741.4,194.1 Q738.9,196.4 735.9,198.1 Q733.0,199.8 730.0,201.4 Q727.1,203.0 723.9,204.2 Q720.7,205.4 717.3,205.4 Q713.9,205.5 710.6,205.1 L707.2,204.8 M839.3,101.8 Q846.0,107.7 849.6,110.2 Q853.3,112.7 856.4,115.9 Q859.5,119.1 861.0,123.3 Q862.5,127.5 863.6,131.8 Q864.7,136.1 864.7,140.5 L864.8,145.0 M886.0,108.4 Q889.2,117.5 890.1,122.2 Q890.9,126.9 891.5,131.7 Q892.1,136.5 892.9,141.2 Q893.7,146.0 893.4,150.7 Q893.1,155.5 891.6,160.1 Q890.1,164.7 888.5,169.2 Q887.0,173.8 885.8,178.5 Q884.6,183.1 884.9,187.9 Q885.2,192.7 886.7,197.3 Q888.2,201.8 889.3,206.5 L890.4,211.2 M908.3,93.3 Q901.0,97.1 896.9,97.8 Q892.9,98.5 888.8,97.9 Q884.7,97.3 880.6,97.5 Q876.5,97.7 872.5,96.9 Q868.5,96.1 864.3,96.2 Q860.2,96.2 856.4,94.8 Q852.5,93.4 848.4,93.2 Q844.3,93.1 840.2,93.2 L836.1,93.3 M926.6,107.4 Q917.6,111.1 913.3,113.3 Q909.0,115.5 904.9,118.2 Q900.9,120.9 897.1,124.0 Q893.4,127.2 891.1,131.4 Q888.7,135.7 887.5,140.4 Q886.3,145.1 885.8,149.9 Q885.4,154.8 886.7,159.5 Q888.0,164.1 888.4,169.0 L888.7,173.8 M773.8,101.1 Q782.6,100.4 786.9,100.8 Q791.3,101.3 795.7,101.5 Q800.1,101.7 804.1,100.1 Q808.2,98.4 811.4,95.3 Q814.5,92.3 816.9,88.6 Q819.3,84.9 822.7,82.2 Q826.1,79.4 829.6,76.7 Q833.2,74.1 837.1,72.2 Q841.1,70.4 845.1,68.6 Q849.1,66.8 852.3,63.8 L855.5,60.7 M762.0,114.0 Q769.9,117.4 774.1,117.5 Q778.4,117.6 782.5,118.9 Q786.5,120.2 790.6,121.6 Q794.7,122.9 798.7,124.4 Q802.7,125.9 806.5,127.8 Q810.3,129.8 814.0,132.0 Q817.7,134.2 820.8,137.0 Q824.0,139.9 827.7,142.1 Q831.3,144.4 835.6,144.8 L839.8,145.2 M258.5,136.4 Q257.5,141.5 258.4,144.0 Q259.3,146.5 260.1,149.0 Q260.9,151.5 261.7,154.0 Q262.5,156.5 261.8,159.0 Q261.0,161.6 260.1,164.0 Q259.2,166.5 258.7,169.1 Q258.1,171.6 257.6,174.2 L257.2,176.8 M294.1,170.4 Q297.0,175.8 299.2,177.9 Q301.4,180.0 303.1,182.4 L304.9,184.9 M227.1,137.3 Q227.6,132.2 228.7,129.9 Q229.9,127.6 230.1,125.1 Q230.3,122.5 231.4,120.2 L232.4,117.8 M272.5,146.7 Q270.5,142.0 269.3,139.6 Q268.2,137.3 266.5,135.4 Q264.8,133.4 262.3,132.6 L259.8,131.8 M239.1,92.5 Q245.3,92.2 248.4,92.0 Q251.5,91.8 254.0,90.0 Q256.5,88.1 259.3,86.8 Q262.1,85.4 264.4,83.4 Q266.8,81.4 269.8,80.6 Q272.8,79.7 274.9,77.5 L277.0,75.2 M296.6,111.7 Q301.0,105.4 304.3,103.5 Q307.7,101.7 310.8,99.4 Q313.9,97.2 317.7,96.9 Q321.6,96.7 325.4,96.4 Q329.2,96.2 333.0,95.9 L336.9,95.7 M330.5,132.1 Q331.9,126.0 334.3,123.9 Q336.6,121.8 337.9,119.0 Q339.3,116.1 339.9,113.1 Q340.6,110.0 339.7,107.0 Q338.9,103.9 337.4,101.2 Q335.9,98.4 333.9,96.0 Q331.8,93.7 329.5,91.5 L327.3,89.3 M304.4,102.8 Q299.3,102.4 296.8,102.6 Q294.2,102.8 292.0,101.5 Q289.7,100.3 287.3,99.7 Q284.8,99.1 283.0,97.2 Q281.3,95.3 280.7,92.8 L280.2,90.3 M223.5,141.9 Q216.8,144.1 214.2,146.5 Q211.6,148.9 208.7,150.9 Q205.8,152.9 202.5,153.9 Q199.1,154.9 196.7,157.5 Q194.3,160.1 193.6,163.5 Q192.8,167.0 191.0,170.0 Q189.2,173.0 187.8,176.2 L186.5,179.5 M262.2,136.1 Q256.7,133.0 253.8,131.7 Q250.9,130.3 247.8,130.5 Q244.6,130.8 241.8,132.3 Q239.0,133.8 236.5,135.8 Q234.0,137.7 232.0,140.2 Q230.0,142.7 228.7,145.6 Q227.4,148.5 224.8,150.2 L222.2,152.0 M217.3,104.4 Q212.4,102.2 210.4,100.5 Q208.3,98.8 205.8,97.9 Q203.2,97.0 200.9,95.7 Q198.5,94.5 196.5,92.7 Q194.4,91.0 193.7,88.4 Q193.0,85.8 191.5,83.7 L189.9,81.5 M231.1,95.1 Q236.4,98.7 238.6,101.0 Q240.7,103.3 241.8,106.2 Q242.9,109.2 244.6,111.9 Q246.3,114.6 248.4,116.9 Q250.6,119.2 253.6,120.2 Q256.6,121.1 259.6,122.2 Q262.6,123.3 264.7,125.6 L266.9,127.9 M321.3,148.1 Q325.8,144.9 327.4,142.6 Q329.0,140.4 331.5,139.4 Q334.1,138.3 336.9,138.3 Q339.6,138.2 342.2,137.3 Q344.8,136.4 347.4,135.5 Q350.0,134.5 352.4,133.2 Q354.8,131.8 357.4,130.7 L359.9,129.6 M272.9,170.6 Q276.9,173.9 278.4,176.0 Q279.9,178.1 281.5,180.2 L283.0,182.3 M265.8,123.0 Q259.4,118.2 256.1,116.1 Q252.8,113.9 250.0,111.1 Q247.3,108.2 244.0,106.0 L240.8,103.7 M324.6,153.8 Q318.0,150.7 314.7,149.2 Q311.4,147.6 309.0,144.8 Q306.7,142.0 305.7,138.5 L304.6,135.0 M279.3,114.2 Q279.4,119.9 279.4,122.8 Q279.3,125.6 280.0,128.3 Q280.8,131.1 282.7,133.2 Q284.7,135.2 287.2,136.4 Q289.8,137.7 291.3,140.1 Q292.9,142.4 295.0,144.3 Q297.1,146.2 298.9,148.4 L300.7,150.6 M291.4,96.8 Q284.4,93.2 281.4,90.8 Q278.3,88.4 275.9,85.3 Q273.6,82.1 271.6,78.7 Q269.7,75.3 269.3,71.5 Q268.9,67.6 268.7,63.7 Q268.6,59.7 270.0,56.1 L271.4,52.4 M217.6,92.8 Q212.6,89.8 210.3,88.1 Q207.9,86.4 205.8,84.4 Q203.8,82.3 200.9,81.8 Q198.1,81.2 195.8,79.4 Q193.6,77.5 191.4,75.6 Q189.2,73.7 187.4,71.4 L185.6,69.2 M252.1,109.3 Q251.2,103.5 249.3,101.2 Q247.5,98.9 245.5,96.8 Q243.4,94.6 241.4,92.5 Q239.3,90.4 236.7,89.1 Q234.0,87.9 231.5,86.3 L229.1,84.7 M253.4,148.6 Q249.3,141.8 246.7,138.8 Q244.2,135.8 241.9,132.5 Q239.6,129.3 236.6,126.7 Q233.7,124.0 230.6,121.5 L227.6,119.0 M247.7,109.6 Q251.6,116.4 253.9,119.5 Q256.2,122.7 256.5,126.6 Q256.7,130.5 255.2,134.1 Q253.6,137.7 250.8,140.5 L248.0,143.2 M331.7,148.9 Q333.9,154.9 335.1,158.0 Q336.2,161.0 338.1,163.7 Q339.9,166.4 342.8,167.7 L345.8,169.0 M333.1,131.0 Q338.0,126.3 339.8,123.5 Q341.6,120.6 343.7,118.0 Q345.8,115.3 348.8,113.8 L351.8,112.2 M298.7,112.7 Q304.2,115.8 306.5,118.0 Q308.7,120.2 310.1,123.0 L311.5,125.8 M260.1,122.2 Q254.1,121.1 251.1,121.0 Q248.0,120.8 245.0,120.8 Q242.0,120.8 238.9,120.7 L235.9,120.5 M318.0,140.7 Q311.3,136.4 308.9,133.3 Q306.5,130.1 303.6,127.5 Q300.6,124.8 299.4,121.1 L298.2,117.3 M309.1,105.5 Q304.6,108.0 302.1,108.6 Q299.6,109.2 297.1,108.9 Q294.6,108.5 292.0,108.2 Q289.5,107.8 287.0,108.5 Q284.6,109.2 282.1,108.7 Q279.6,108.1 277.1,108.7 L274.6,109.3 M331.4,115.4 Q326.9,121.2 325.3,124.4 Q323.7,127.6 321.0,130.0 Q318.3,132.4 315.5,134.6 Q312.7,136.9 309.4,138.4 Q306.1,139.9 303.3,142.1 Q300.4,144.3 297.0,145.4 L293.5,146.4 M260.4,144.9 Q266.0,147.0 268.0,149.1 Q270.1,151.2 271.8,153.6 Q273.5,156.0 275.0,158.6 Q276.4,161.2 278.5,163.3 Q280.5,165.4 282.2,167.9 Q283.9,170.3 284.0,173.3 L284.0,176.3 M286.9,107.9 Q291.8,110.4 294.0,112.0 Q296.3,113.6 297.7,116.0 Q299.1,118.4 301.4,119.9 Q303.6,121.5 305.5,123.5 Q307.4,125.5 310.0,126.3 L312.7,127.0 M333.5,98.1 Q339.7,98.2 342.7,97.2 Q345.6,96.1 348.6,95.1 Q351.5,94.0 354.6,93.4 Q357.7,92.8 360.7,92.0 L363.7,91.3 M320.9,149.4 Q318.3,144.4 317.4,141.7 Q316.6,139.0 315.9,136.3 Q315.2,133.6 313.9,131.1 Q312.6,128.6 310.4,126.8 Q308.2,125.0 307.2,122.4 Q306.1,119.8 304.6,117.5 L303.1,115.1 M258.6,153.1 Q255.3,146.5 253.6,143.2 Q251.9,139.9 252.1,136.2 Q252.3,132.5 251.6,128.9 Q250.9,125.2 249.3,121.9 Q247.7,118.5 248.0,114.8 Q248.3,111.2 250.6,108.2 Q252.9,105.3 256.0,103.3 L259.1,101.3 M586.7,146.3 Q579.5,144.6 576.2,143.0 Q572.8,141.4 569.3,140.4 Q565.7,139.4 562.0,139.3 Q558.3,139.2 554.7,138.7 Q551.0,138.2 547.3,138.0 L543.6,137.7 M683.1,156.9 Q688.5,153.2 691.6,152.2 Q694.8,151.3 697.5,149.5 Q700.3,147.7 703.4,146.8 Q706.6,145.8 709.9,145.3 Q713.1,144.7 716.4,144.7 Q719.7,144.7 722.9,144.0 Q726.1,143.3 729.4,143.4 Q732.7,143.5 736.0,143.1 L739.2,142.6 M536.7,111.5 Q544.0,115.6 547.4,118.0 Q550.8,120.5 554.1,123.0 Q557.4,125.5 560.5,128.3 Q563.6,131.2 567.4,132.9 Q571.2,134.6 575.1,136.1 Q579.0,137.6 582.6,139.7 Q586.2,141.8 590.2,142.8 L594.3,143.8 M609.8,89.4 Q603.6,85.0 601.2,82.0 Q598.7,79.1 596.3,76.2 Q593.8,73.3 590.8,70.9 L587.8,68.6 M677.4,115.7 Q673.8,110.4 672.0,107.8 Q670.3,105.1 669.0,102.2 Q667.7,99.3 667.3,96.1 Q667.0,93.0 667.5,89.8 Q668.1,86.7 667.9,83.5 Q667.7,80.4 668.4,77.3 Q669.1,74.1 669.0,71.0 Q669.0,67.8 669.9,64.7 L670.7,61.7 M689.0,122.0 Q679.5,119.3 675.3,116.8 Q671.0,114.3 666.2,113.4 Q661.4,112.5 656.6,111.3 Q651.8,110.2 646.9,110.3 Q641.9,110.5 637.2,109.1 Q632.5,107.6 627.7,106.9 Q622.8,106.2 618.5,103.8 L614.1,101.5 M530.2,130.0 Q537.0,125.8 540.8,124.5 Q544.6,123.2 548.2,121.5 Q551.8,119.8 555.7,118.7 Q559.5,117.5 563.5,116.8 Q567.4,116.1 571.4,116.0 Q575.4,115.8 579.2,114.4 Q582.9,113.0 586.4,111.1 Q590.0,109.2 593.2,106.9 L596.5,104.5 M576.0,105.0 Q570.3,97.4 567.4,93.5 Q564.6,89.6 560.8,86.8 Q556.9,83.9 553.5,80.5 Q550.0,77.2 545.9,74.7 Q541.8,72.2 537.3,70.9 Q532.7,69.5 527.9,68.7 Q523.2,67.8 518.4,67.9 L513.6,67.9 M431.3,108.5 Q432.6,101.5 432.0,97.9 Q431.4,94.3 431.2,90.7 Q431.0,87.1 431.3,83.6 Q431.6,80.0 430.8,76.4 L430.0,72.9 M381.4,114.5 Q372.2,117.5 367.4,118.2 Q362.6,118.8 357.7,118.8 Q352.9,118.8 348.1,118.4 Q343.2,117.9 338.8,116.0 Q334.3,114.1 329.7,112.6 Q325.1,111.1 320.3,110.6 L315.5,110.0 M675.1,128.7 Q667.7,129.7 664.0,129.2 Q660.2,128.6 656.7,127.4 Q653.1,126.2 649.9,124.3 Q646.7,122.4 644.0,119.8 Q641.3,117.2 639.1,114.1 Q637.0,111.1 635.2,107.8 L633.4,104.5 M548.5,154.4 Q539.8,155.5 535.4,155.9 Q531.0,156.3 527.0,158.0 Q522.9,159.7 518.8,161.3 Q514.7,162.9 510.5,164.4 Q506.4,166.0 502.2,167.3 Q498.0,168.7 494.3,171.0 L490.5,173.3 M454.8,132.2 Q461.5,138.1 463.9,141.8 Q466.3,145.5 468.8,149.2 Q471.3,152.8 474.9,155.5 L478.4,158.2 M386.2,123.5 Q379.8,118.9 377.0,116.2 Q374.2,113.5 371.2,110.9 Q368.2,108.4 365.8,105.3 Q363.4,102.2 361.6,98.7 Q359.8,95.2 358.2,91.6 Q356.6,88.0 353.9,85.1 L351.3,82.2 M460.6,94.3 Q470.5,93.7 475.4,92.7 Q480.2,91.7 484.8,89.6 L489.3,87.6 M387.4,142.2 Q388.5,134.8 388.9,131.1 Q389.3,127.4 390.7,123.9 Q392.2,120.5 393.4,116.9 Q394.5,113.3 394.6,109.6 Q394.7,105.8 395.9,102.3 L397.2,98.8 M646.1,100.0 Q650.5,95.0 652.8,92.5 Q655.0,90.0 657.7,87.9 L660.3,85.8 M417.9,89.3 Q425.5,91.6 429.3,92.5 Q433.1,93.5 436.9,94.1 Q440.8,94.7 444.8,94.6 Q448.7,94.5 452.6,94.2 L456.5,94.0 M506.9,518.6 Q512.5,515.5 515.2,513.7 Q517.9,511.9 520.9,510.9 Q524.0,509.8 527.2,509.8 Q530.4,509.8 533.4,508.5 Q536.3,507.1 538.8,505.1 Q541.3,503.0 542.9,500.2 Q544.5,497.4 544.8,494.2 Q545.1,491.0 545.7,487.8 Q546.3,484.7 547.4,481.6 L548.6,478.6 M487.1,567.2 Q479.5,570.2 475.5,570.8 Q471.4,571.3 467.8,573.2 Q464.1,575.0 460.0,575.0 Q455.9,575.1 452.0,576.1 L448.0,577.2 M648.4,552.7 Q640.2,549.9 635.9,549.3 Q631.6,548.6 627.3,549.4 Q623.1,550.2 618.7,550.3 Q614.4,550.4 610.2,551.6 Q606.0,552.8 602.1,554.8 Q598.2,556.7 595.4,560.0 Q592.5,563.2 588.6,565.1 Q584.7,567.0 580.4,567.5 Q576.1,568.0 571.9,566.9 L567.7,565.8 M594.4,539.6 Q584.7,538.4 580.2,536.5 Q575.7,534.7 570.9,533.6 Q566.2,532.6 561.3,531.9 Q556.5,531.1 551.7,532.0 Q546.9,532.8 542.2,534.2 L537.5,535.5 M618.3,543.7 Q621.1,534.7 622.4,530.1 Q623.7,525.6 623.1,520.9 Q622.5,516.2 621.5,511.6 Q620.5,507.0 619.2,502.5 Q617.9,497.9 616.7,493.4 L615.6,488.8 M550.2,524.4 Q543.2,531.1 541.1,535.4 Q539.0,539.8 536.0,543.6 Q533.1,547.5 531.3,552.0 L529.6,556.5 M527.9,561.3 Q524.1,556.3 522.4,553.6 Q520.7,551.0 519.5,548.1 Q518.2,545.2 516.2,542.8 Q514.3,540.3 511.7,538.4 Q509.2,536.6 507.5,533.9 Q505.8,531.3 503.7,528.9 Q501.6,526.6 500.4,523.7 Q499.3,520.8 497.4,518.2 Q495.5,515.7 493.0,513.8 L490.5,511.9 M615.9,567.7 Q617.8,559.1 618.3,554.8 Q618.8,550.4 618.3,546.1 Q617.8,541.7 616.6,537.5 Q615.3,533.2 613.3,529.3 L611.3,525.4 M564.7,559.1 Q561.9,566.6 561.8,570.6 Q561.8,574.7 560.1,578.3 Q558.4,582.0 556.8,585.7 Q555.2,589.3 552.6,592.4 Q549.9,595.4 546.4,597.3 L542.8,599.2 M547.0,538.4 Q538.0,538.8 533.5,538.8 Q529.0,538.8 524.6,538.4 Q520.1,538.0 515.8,536.8 Q511.5,535.6 507.0,535.1 L502.6,534.7 M514.5,522.2 Q507.8,517.9 504.9,515.2 Q501.9,512.5 498.4,510.5 Q495.0,508.4 492.2,505.5 Q489.5,502.6 488.2,498.9 L486.9,495.1 M597.4,545.2 Q602.9,550.1 605.5,552.7 Q608.2,555.3 611.4,557.1 Q614.7,558.8 617.2,561.6 Q619.6,564.3 620.7,567.9 Q621.7,571.4 621.3,575.1 Q620.8,578.8 620.3,582.4 Q619.8,586.1 618.2,589.4 Q616.5,592.8 616.3,596.5 Q616.0,600.2 614.8,603.7 L613.5,607.1 M487.0,502.6 Q490.5,508.6 493.3,510.6 Q496.2,512.5 499.0,514.5 Q501.8,516.5 504.9,518.2 Q507.9,519.8 510.7,521.8 Q513.6,523.8 516.1,526.2 Q518.6,528.5 520.9,531.2 Q523.1,533.8 525.4,536.4 Q527.7,539.0 530.1,541.5 L532.4,544.1 M479.2,550.5 Q488.1,551.5 492.5,551.1 Q496.9,550.7 501.4,550.4 Q505.8,550.0 510.2,550.4 Q514.6,550.8 519.1,551.0 Q523.5,551.1 527.6,553.0 Q531.6,554.8 536.0,555.4 Q540.4,556.0 544.3,558.2 L548.1,560.4 M575.5,523.2 Q567.6,518.4 563.4,516.4 Q559.3,514.4 554.9,512.9 Q550.5,511.3 546.0,510.2 Q541.6,509.0 537.1,507.6 Q532.7,506.2 529.4,503.0 L526.0,499.9 M520.0,562.2 Q526.8,554.9 528.4,550.2 Q530.0,545.5 531.2,540.6 Q532.4,535.8 533.1,530.9 Q533.7,525.9 534.3,521.0 Q534.8,516.0 536.0,511.2 Q537.1,506.3 539.2,501.8 Q541.2,497.2 541.4,492.2 Q541.6,487.2 543.3,482.6 L545.0,477.9 M598.0,531.2 Q607.3,533.4 612.1,533.3 Q616.8,533.3 621.3,535.0 Q625.8,536.6 630.0,539.0 L634.1,541.4 M583.4,525.9 Q593.1,524.7 597.9,524.4 Q602.7,524.1 607.0,521.9 Q611.3,519.7 616.2,519.2 Q621.0,518.7 625.7,517.5 Q630.4,516.2 635.2,517.0 Q640.0,517.7 644.7,518.8 Q649.4,520.0 653.8,522.1 Q658.1,524.3 662.0,527.2 L665.8,530.1 M552.1,508.8 Q554.0,516.8 554.3,520.9 Q554.6,525.1 554.8,529.2 Q555.0,533.3 555.6,537.4 Q556.2,541.5 555.9,545.6 L555.6,549.7 M625.0,562.7 Q634.9,563.6 639.8,563.7 Q644.8,563.9 649.4,565.5 Q654.1,567.2 659.0,568.2 Q663.8,569.1 668.3,571.2 Q672.8,573.3 676.1,577.0 Q679.3,580.7 682.9,584.1 Q686.5,587.5 689.2,591.7 Q691.9,595.8 696.0,598.5 L700.2,601.2 M528.8,589.3 Q520.7,590.7 517.1,592.5 Q513.4,594.3 509.5,595.9 Q505.7,597.4 502.1,599.3 Q498.5,601.2 494.5,602.2 Q490.5,603.1 486.7,604.8 L483.0,606.5 M523.8,508.5 Q521.8,517.1 519.9,521.1 Q518.0,525.0 516.7,529.3 Q515.5,533.5 515.8,537.9 Q516.1,542.4 518.3,546.2 Q520.5,550.1 523.3,553.5 Q526.1,556.9 529.3,559.9 L532.5,563.0 M528.2,513.7 Q531.2,521.3 534.0,524.3 Q536.8,527.4 540.5,529.2 Q544.2,531.0 547.7,533.1 Q551.3,535.1 554.7,537.4 Q558.1,539.7 560.8,542.8 Q563.5,545.9 565.1,549.7 L566.7,553.5 M480.3,538.4 Q485.3,530.2 489.3,527.5 Q493.3,524.9 497.4,522.4 Q501.6,520.0 504.8,516.5 Q508.1,513.0 510.9,509.1 Q513.8,505.2 515.3,500.7 Q516.8,496.1 517.4,491.4 Q518.1,486.6 518.7,481.8 Q519.3,477.1 518.0,472.4 L516.8,467.8 M558.8,539.1 Q551.7,536.9 548.5,535.1 Q545.2,533.3 541.9,531.5 Q538.7,529.7 535.6,527.6 L532.5,525.5 M563.2,513.9 Q570.4,515.0 573.7,516.5 Q577.1,518.0 580.6,519.0 Q584.1,520.0 587.8,520.4 Q591.4,520.9 594.8,522.3 Q598.2,523.8 600.9,526.2 Q603.6,528.7 605.1,532.0 L606.6,535.4 M503.3,530.2 Q509.8,525.6 512.7,523.0 Q515.7,520.4 518.3,517.4 Q520.8,514.4 523.9,511.9 Q527.0,509.5 530.4,507.4 L533.8,505.4 M658.0,570.8 Q654.6,579.4 654.4,584.0 Q654.3,588.7 653.8,593.3 Q653.4,597.9 652.6,602.5 Q651.8,607.0 650.8,611.6 Q649.9,616.1 648.1,620.4 L646.4,624.7 M580.3,585.9 Q573.5,585.7 570.2,584.6 Q567.0,583.5 563.6,583.7 Q560.2,583.9 556.9,583.1 Q553.6,582.2 550.6,580.5 Q547.6,578.9 544.9,576.7 Q542.2,574.6 539.0,573.4 Q535.8,572.3 532.4,571.7 Q529.1,571.1 525.7,571.3 L522.2,571.5 M506.7,539.2 Q499.7,546.3 496.5,550.2 Q493.3,554.0 490.1,557.8 Q486.9,561.7 482.6,564.0 Q478.2,566.4 473.5,568.0 Q468.7,569.6 464.0,571.0 Q459.2,572.4 454.2,572.5 L449.2,572.6 M370.4,587.0 Q364.0,586.9 360.8,586.4 Q357.6,586.0 354.4,586.4 L351.2,586.9 M412.9,577.3 Q405.8,570.5 403.2,566.3 Q400.7,562.1 396.8,559.0 Q392.9,556.0 388.2,554.5 Q383.5,552.9 378.6,552.6 Q373.7,552.3 369.0,551.0 L364.2,549.6 M403.7,580.9 Q403.3,588.5 402.7,592.2 Q402.2,596.0 401.6,599.7 Q401.1,603.5 401.1,607.2 Q401.1,611.0 402.6,614.5 L404.2,617.9 M327.6,573.1 Q336.9,572.8 341.5,572.0 Q346.1,571.2 350.5,569.7 L355.0,568.3 M441.8,576.1 Q436.2,581.5 433.9,584.7 Q431.6,587.8 430.0,591.3 L428.3,594.8 M446.1,564.3 Q448.9,556.1 451.8,552.9 Q454.8,549.7 457.0,546.0 L459.2,542.2" fill="none" stroke="#f8cd66" stroke-width="1.25" clip-path="url(#landclip)"/>
<line x1="206.8" y1="89" x2="206.8" y2="590" stroke="#fff" stroke-opacity=".22" stroke-width="1"/>
<line x1="398.8" y1="89" x2="398.8" y2="590" stroke="#fff" stroke-opacity=".22" stroke-width="1"/>
<line x1="590.5" y1="89" x2="590.5" y2="590" stroke="#fff" stroke-opacity=".22" stroke-width="1"/>
<line x1="782.3" y1="89" x2="782.3" y2="590" stroke="#fff" stroke-opacity=".22" stroke-width="1"/>
<line x1="974" y1="89" x2="974" y2="590" stroke="#fff" stroke-opacity=".22" stroke-width="1"/>
<line x1="1166" y1="89" x2="1166" y2="590" stroke="#fff" stroke-opacity=".22" stroke-width="1"/>
<line x1="62" y1="116.1" x2="1321" y2="116.1" stroke="#fff" stroke-opacity=".22" stroke-width="1"/>
<line x1="62" y1="308.2" x2="1321" y2="308.2" stroke="#fff" stroke-opacity=".22" stroke-width="1"/>
<line x1="62" y1="500.3" x2="1321" y2="500.3" stroke="#fff" stroke-opacity=".22" stroke-width="1"/>
<path d="M317,89 L317,95 L338,95 L345,89 M346,89 L346,113 L364,113 L379,138 L373,172" fill="none" stroke="#6b6b6b" stroke-width=".9"/>
<path d="M435,89 L420,100 L395,115 L380,125 M435,89 L436,115 L445,135 L470,140 L500,150 L520,160 L525,172" fill="none" stroke="#6b6b6b" stroke-width=".9"/>
<path d="M349,561 L350,575 L347,590" fill="none" stroke="#6b6b6b" stroke-width=".9"/>
<path d="M500,89 L502,110 L525,113 L535,128 L540,150 L545,172" fill="none" stroke="#777" stroke-width=".8" stroke-dasharray="2 1.5"/>
<path d="M680,89 L690,100 L700,120 L692,140 L705,150 L745,147 L760,145 L755,170" fill="none" stroke="#777" stroke-width=".8" stroke-dasharray="2 1.5"/>
<path d="M770,89 L780,100 L760,130 L785,130 L810,140" fill="none" stroke="#777" stroke-width=".8" stroke-dasharray="2 1.5"/>
<path d="M760,185 L790,175 L810,185 L835,185 L845,200 L865,197 L862,240 L872,254" fill="none" stroke="#777" stroke-width=".8" stroke-dasharray="2 1.5"/>
<path d="M738,280 L760,290 L800,300 L830,310" fill="none" stroke="#777" stroke-width=".8" stroke-dasharray="2 1.5"/>
<path d="M620,500 L632,520 L630,540" fill="none" stroke="#777" stroke-width=".8" stroke-dasharray="2 1.5"/>
<path d="M400,500 L440,530 L460,561" fill="none" stroke="#777" stroke-width=".8" stroke-dasharray="2 1.5"/>
<text x="252" y="107.5" font-family="Liberation Sans" font-size="11.2" font-weight="bold" fill="#222" letter-spacing="0" stroke="#fff" stroke-width="2.2" stroke-linejoin="round" paint-order="stroke">Peru</text>
<text x="224.8" y="126.8" font-family="Liberation Sans" font-size="10" font-weight="normal" fill="#222" letter-spacing="0" stroke="#fff" stroke-width="2.2" stroke-linejoin="round" paint-order="stroke">Lima</text>
<circle cx="235.5" cy="132" r="2.2" fill="#fff" stroke="#333" stroke-width="1"/><circle cx="235.5" cy="132" r=".8" fill="#333"/>
<text x="311.3" y="153.7" font-family="Liberation Sans" font-size="7.8" font-weight="normal" fill="#222" letter-spacing="0" stroke="#fff" stroke-width="2.2" stroke-linejoin="round" paint-order="stroke">Cusco</text>
<circle cx="323" cy="157" r="1.8" fill="#fff" stroke="#555" stroke-width=".9"/>
<text x="453.7" y="116.6" font-family="Liberation Sans" font-size="8" font-weight="normal" fill="#4d4d4d" letter-spacing="0.5" stroke="#fff" stroke-width="2.2" stroke-linejoin="round" paint-order="stroke">RONDÔNIA</text>
<text x="565.6" y="147.8" font-family="Liberation Sans" font-size="8" font-weight="normal" fill="#4d4d4d" letter-spacing="0.56" stroke="#fff" stroke-width="2.2" stroke-linejoin="round" paint-order="stroke">MATO GROSSO</text>
<text x="702.3" y="112.8" font-family="Liberation Sans" font-size="8" font-weight="normal" fill="#4d4d4d" letter-spacing="0.73" stroke="#fff" stroke-width="2.2" stroke-linejoin="round" paint-order="stroke">TOCANTINS</text>
<text x="724.9" y="96" font-family="Liberation Sans" font-size="8" font-weight="normal" fill="#222" letter-spacing="0" stroke="#fff" stroke-width="2.2" stroke-linejoin="round" paint-order="stroke">lmas</text>
<circle cx="726" cy="99.5" r="1.5" fill="#fff" stroke="#555" stroke-width=".8"/>
<text x="931.4" y="96.7" font-family="Liberation Sans" font-size="8" font-weight="normal" fill="#4d4d4d" letter-spacing="1.1" stroke="#fff" stroke-width="2.2" stroke-linejoin="round" paint-order="stroke">ALAGOAS</text>
<text x="900.6" y="127" font-family="Liberation Sans" font-size="8" font-weight="normal" fill="#4d4d4d" letter-spacing="0.33" stroke="#fff" stroke-width="2.2" stroke-linejoin="round" paint-order="stroke">SERGIPE</text>
<text x="830" y="138.8" font-family="Liberation Sans" font-size="8" font-weight="normal" fill="#4d4d4d" letter-spacing="0.75" stroke="#fff" stroke-width="2.2" stroke-linejoin="round" paint-order="stroke">BAHIA</text>
<text x="873" y="143.6" font-family="Liberation Sans" font-size="10.1" font-weight="normal" fill="#222" letter-spacing="0" stroke="#fff" stroke-width="2.2" stroke-linejoin="round" paint-order="stroke">Salvador</text>
<circle cx="893.5" cy="148" r="2" fill="#fff" stroke="#555" stroke-width=".9"/>
<text x="758.3" y="230.7" font-family="Liberation Sans" font-size="8" font-weight="normal" fill="#4d4d4d" letter-spacing="0.65" stroke="#fff" stroke-width="2.2" stroke-linejoin="round" paint-order="stroke">MINAS GERAIS</text>
<text x="846" y="256.7" font-family="Liberation Sans" font-size="8" font-weight="normal" fill="#4d4d4d" letter-spacing="0.47" stroke="#fff" stroke-width="2.2" stroke-linejoin="round" paint-order="stroke">ESPÍRITO</text>
<text x="851.4" y="265.5" font-family="Liberation Sans" font-size="8" font-weight="normal" fill="#4d4d4d" letter-spacing="0.72" stroke="#fff" stroke-width="2.2" stroke-linejoin="round" paint-order="stroke">SANTO</text>
<text x="766.6" y="267" font-family="Liberation Sans" font-size="10.4" font-weight="normal" fill="#222" letter-spacing="0" stroke="#fff" stroke-width="2.2" stroke-linejoin="round" paint-order="stroke">Belo Horizonte</text>
<circle cx="800.5" cy="271.6" r="2" fill="#fff" stroke="#555" stroke-width=".9"/>
<text x="825.5" y="307" font-family="Liberation Sans" font-size="8" font-weight="normal" fill="#4d4d4d" letter-spacing="0.38" stroke="#fff" stroke-width="2.2" stroke-linejoin="round" paint-order="stroke">RIO DE</text>
<text x="821" y="315.7" font-family="Liberation Sans" font-size="8" font-weight="normal" fill="#4d4d4d" letter-spacing="0.47" stroke="#fff" stroke-width="2.2" stroke-linejoin="round" paint-order="stroke">JANEIRO</text>
<text x="780.9" y="338.6" font-family="Liberation Sans" font-size="10.2" font-weight="normal" fill="#222" letter-spacing="0" stroke="#fff" stroke-width="2.2" stroke-linejoin="round" paint-order="stroke">Rio de Janeiro</text>
<circle cx="814.4" cy="326.4" r="2" fill="#fff" stroke="#555" stroke-width=".9"/>
<text x="741.6" y="289.8" font-family="Liberation Sans" font-size="8" font-weight="normal" fill="#333" letter-spacing="0" stroke="#fff" stroke-width="2.2" stroke-linejoin="round" paint-order="stroke">Pre</text>
<text x="741" y="336" font-family="Liberation Sans" font-size="10" font-weight="normal" fill="#222" letter-spacing="0" stroke="#fff" stroke-width="2.2" stroke-linejoin="round" paint-order="stroke">ão Paulo</text>
<text x="740" y="193" font-family="Liberation Sans" font-size="10" font-weight="normal" fill="#222" letter-spacing="0" stroke="#fff" stroke-width="2.2" stroke-linejoin="round" paint-order="stroke">lia</text>
<text x="740" y="250" font-family="Liberation Sans" font-size="8" font-weight="normal" fill="#333" letter-spacing="0" stroke="#fff" stroke-width="2.2" stroke-linejoin="round" paint-order="stroke">ia</text>
<text x="740" y="425" font-family="Liberation Sans" font-size="8" font-weight="normal" fill="#444" letter-spacing="0" stroke="#fff" stroke-width="2.2" stroke-linejoin="round" paint-order="stroke">is</text>
<text x="445" y="509.4" font-family="Liberation Sans" font-size="8" font-weight="normal" fill="#4d4d4d" letter-spacing="0.4" stroke="#fff" stroke-width="2.2" stroke-linejoin="round" paint-order="stroke">CÓRDOVA</text>
<text x="516" y="513.6" font-family="Liberation Sans" font-size="8" font-weight="normal" fill="#4d4d4d" letter-spacing="0.35" stroke="#fff" stroke-width="2.2" stroke-linejoin="round" paint-order="stroke">ENTRE RÍOS</text>
<text x="573" y="522" font-family="Liberation Sans" font-size="11.1" font-weight="bold" fill="#222" letter-spacing="0" stroke="#fff" stroke-width="2.2" stroke-linejoin="round" paint-order="stroke">Uruguai</text>
<text x="497" y="533" font-family="Liberation Sans" font-size="10" font-weight="normal" fill="#222" letter-spacing="0" stroke="#fff" stroke-width="2.2" stroke-linejoin="round" paint-order="stroke">Rosário</text>
<circle cx="515" cy="519" r="1.8" fill="#fff" stroke="#444" stroke-width=".9"/>
<text x="535.6" y="548" font-family="Liberation Sans" font-size="8" font-weight="normal" fill="#4d4d4d" letter-spacing="0.84" stroke="#fff" stroke-width="2.2" stroke-linejoin="round" paint-order="stroke">CIDADE</text>
<text x="520.6" y="557" font-family="Liberation Sans" font-size="8" font-weight="normal" fill="#4d4d4d" letter-spacing="0.71" stroke="#fff" stroke-width="2.2" stroke-linejoin="round" paint-order="stroke">AUTÔNOMA DE</text>
<text x="520.6" y="566" font-family="Liberation Sans" font-size="8" font-weight="normal" fill="#4d4d4d" letter-spacing="0.6" stroke="#fff" stroke-width="2.2" stroke-linejoin="round" paint-order="stroke">BUENOS AIRES</text>
<text x="412.5" y="570.6" font-family="Liberation Sans" font-size="11.3" font-weight="bold" fill="#222" letter-spacing="0" stroke="#fff" stroke-width="2.2" stroke-linejoin="round" paint-order="stroke">Argentina</text>
<text x="1280" y="435.3" font-family="Liberation Sans" font-size="8.5" font-weight="normal" fill="#2f62c6" letter-spacing="1.5" stroke="#fff" stroke-width="0" stroke-linejoin="round" paint-order="stroke">Oceano</text>
<text x="1265" y="445.6" font-family="Liberation Sans" font-size="8.5" font-weight="normal" fill="#2f62c6" letter-spacing="1.5" stroke="#fff" stroke-width="0" stroke-linejoin="round" paint-order="stroke">Atlântico S</text>
<path d="M762,303 C759.4625,297.925 754.75,292.775 754.75,286.25 A7.25,7.25 0 0 1 769.25,286.25 C769.25,292.775 764.5375,297.925 762,303z" fill="#1a7868"/><text x="762" y="292.01" text-anchor="middle" font-family="Liberation Sans" font-size="11" fill="#fff" fill-opacity=".88">7</text>
<path d="M754.5,340.7 C751.35,334.4 745.5,329.1 745.5,321.0 A9.0,9.0 0 0 1 763.5,321.0 C763.5,329.1 757.65,334.4 754.5,340.7z" fill="#3e0a1d" transform="translate(2.2,-1.5)"/><path d="M754.5,340.7 C751.35,334.4 745.5,329.1 745.5,321.0 A9.0,9.0 0 0 1 763.5,321.0 C763.5,329.1 757.65,334.4 754.5,340.7z" fill="none" stroke="#3e0a1d" stroke-width="1.4"/><path d="M754.5,340.7 C751.35,334.4 745.5,329.1 745.5,321.0 A9.0,9.0 0 0 1 763.5,321.0 C763.5,329.1 757.65,334.4 754.5,340.7z" fill="#981a4e"/><text x="754.5" y="327.56" text-anchor="middle" font-family="Liberation Sans" font-size="11" fill="#fff" fill-opacity=".88">3</text>
<path d="M716.6,98.5 C713.45,92.2 707.6,97.1 707.6,89.0 A9.0,9.0 0 0 1 725.6,89.0 C725.6,97.1 719.75,92.2 716.6,98.5z" fill="#56772a"/>
<circle cx="716.6" cy="88" r="4" fill="none" stroke="#fff" stroke-width="1.5"/>
<path d="M740,222 C744,226 744,236 740,240z" fill="#4f7a2a"/></svg></div>


<!-- MAP CONTROLS -->
<div class="a" style="left:62px;top:132px;width:25px;height:32px;background:#fff;border-radius:0 4px 4px 0"></div>
<svg class="a" style="left:67px;top:141px" width="12" height="12" viewBox="0 0 12 12"><circle cx="4.8" cy="4.8" r="3.4" fill="none" stroke="#555" stroke-width="1.4"/><path d="M7.3 7.3L10.8 10.8" stroke="#555" stroke-width="1.6"/></svg>
<div class="a" style="left:1284px;top:96px;width:30px;height:61px;background:#fff;box-shadow:0 1px 2px rgba(0,0,0,.2)"></div>
<div class="a" style="left:1288px;top:126px;width:22px;height:1px;background:#e6e6e6"></div>
<div class="a" style="left:1292px;top:109.7px;width:13.2px;height:3px;background:#666"></div>
<div class="a" style="left:1297.1px;top:104.3px;width:3px;height:13.6px;background:#666"></div>
<div class="a" style="left:1292px;top:140.2px;width:13.2px;height:3.2px;background:#666"></div>

<!-- PRE-CARGAS PANEL -->
<div class="a" style="left:60px;top:170px;width:680px;height:332px;background:#fff;border-radius:0 5px 4px 0;box-shadow:1px 1px 2px rgba(0,0,0,.28)"></div>
<div class="t" style="left:111.5px;top:179.9px;font-size:10.7px;color:#6f6f6f">Pré Cargas</div>
<div class="t" style="left:216.2px;top:179.7px;font-size:11.2px;color:#6f6f6f">Carregamentos Gravados</div>
<div class="a" style="left:78px;top:206px;width:644px;height:1px;background:#dedede"></div>
<div class="a" style="left:78px;top:204px;width:120px;height:2px;background:#2c4aa5"></div>
<svg class="a" style="left:571px;top:179px" width="19" height="13" viewBox="0 0 19 13"><rect x="0.7" y="1" width="14" height="9" rx="1" fill="#fff" stroke="#444" stroke-width="1"/><rect x="2.5" y="3" width="10" height="4" fill="#d8c060"/><circle cx="5" cy="5" r="1" fill="#555"/><circle cx="8" cy="5" r="1" fill="#555"/><circle cx="11" cy="5" r="1" fill="#555"/><rect x="13" y="4" width="5" height="8" rx="1" fill="#6a90c8" stroke="#333" stroke-width=".8"/><rect x="3" y="10" width="7" height="2" fill="#5a7fb8"/></svg>
<div class="t" style="left:591.3px;top:181px;font-size:8px;color:#1f5590;-webkit-text-stroke:0.2px #1f5590">Compartilhe sua opinião</div>
<svg class="a" style="left:690px;top:180px" width="11" height="10" viewBox="0 0 11 10"><rect x="0" y="0" width="4.6" height="6.2" fill="#222"/><rect x="0" y="7.2" width="4.6" height="2.8" fill="#222"/><rect x="5.6" y="0" width="5.4" height="2.8" fill="#222"/><rect x="5.6" y="3.8" width="5.4" height="6.2" fill="#222"/></svg>
<div class="a" style="left:720px;top:180px;width:11px;height:10.5px;border:1.6px solid #222;border-radius:1px"></div>

<svg class="a" style="left:110px;top:227px" width="14" height="14" viewBox="0 0 14 14"><path d="M12.5 7H2.2M7 2L2 7l5 5" fill="none" stroke="#5b8a30" stroke-width="2.1" stroke-linecap="round" stroke-linejoin="round"/></svg>
<div class="t b" style="left:156.6px;top:228.6px;font-size:9.9px;color:#222">Pedidos</div>
<div class="t hv" style="left:412.4px;top:223.3px;font-size:10px;letter-spacing:-0.2px;color:#222">IPUEIRAS</div>
<svg class="a" style="left:690px;top:228px" width="16" height="13" viewBox="0 0 16 13"><g fill="#222"><circle cx="5.5" cy="7" r="3.6"/><g stroke="#222" stroke-width="2.2"><path d="M5.5 1.8v10.4M0.3 7h10.4M1.8 3.3l7.4 7.4M9.2 3.3l-7.4 7.4"/></g></g><circle cx="5.5" cy="7" r="1.5" fill="#fff"/><circle cx="12.5" cy="3" r="2" fill="none" stroke="#222" stroke-width="1.3"/><circle cx="12.5" cy="10" r="2" fill="none" stroke="#222" stroke-width="1.3"/></svg>
<div class="a" style="left:78px;top:258px;width:644px;height:1px;background:#dedede"></div>

<!-- table header -->
<div class="a" style="left:96px;top:277px;width:12px;height:12px;border:1.25px solid #606060;border-radius:2px"></div>
<div class="t" style="left:125.2px;top:277.2px;font-size:9.4px;color:#6d6d6d">Ações</div>
<div class="t b" style="left:180.4px;top:276.7px;font-size:10.3px;color:#1f1f1f">Nº Pedido</div>
<div class="a" style="left:231px;top:273px;width:15px;height:15px;background:#ffe600;border-radius:3px 5px 2px 2px"></div>
<div class="t b" style="left:273.2px;top:276.4px;font-size:10.5px;color:#1f1f1f">Cód. Cliente</div>
<div class="t" style="left:379px;top:275.9px;font-size:11px;color:#6f6f6f">Tipo Cliente</div>
<div class="t" style="left:481.3px;top:275.5px;font-size:11.4px;color:#6f6f6f">Conferido</div>
<div class="t" style="left:574.3px;top:275.8px;font-size:11.1px;color:#6f6f6f">Nome Cliente</div>
<svg class="a" style="left:232.5px;top:279px" width="8" height="8" viewBox="0 0 8 8"><path d="M0.6 1h6.8L4.6 4.3v3.2L3.4 6.6V4.3z" fill="none" stroke="#2a2a2a" stroke-width="1"/></svg>
<svg class="a" style="left:338.5px;top:279px" width="8" height="8" viewBox="0 0 8 8"><path d="M0.6 1h6.8L4.6 4.3v3.2L3.4 6.6V4.3z" fill="none" stroke="#2a2a2a" stroke-width="1"/></svg>
<svg class="a" style="left:442px;top:279px" width="8" height="8" viewBox="0 0 8 8"><path d="M0.6 1h6.8L4.6 4.3v3.2L3.4 6.6V4.3z" fill="none" stroke="#707070" stroke-width="1"/></svg>
<svg class="a" style="left:535px;top:279px" width="8" height="8" viewBox="0 0 8 8"><path d="M0.6 1h6.8L4.6 4.3v3.2L3.4 6.6V4.3z" fill="none" stroke="#707070" stroke-width="1"/></svg>
<svg class="a" style="left:647px;top:279px" width="8" height="8" viewBox="0 0 8 8"><path d="M0.6 1h6.8L4.6 4.3v3.2L3.4 6.6V4.3z" fill="none" stroke="#707070" stroke-width="1"/></svg>

<div class="a" style="left:78px;top:297px;width:644px;height:1px;background:#dedede"></div>
<div class="a" style="left:96px;top:307px;width:12px;height:12px;border:1.25px solid #606060;border-radius:2px"></div>
<svg class="a" style="left:130px;top:308.5px" width="16" height="11" viewBox="0 0 16 11"><path d="M0.3 5.25C2.5 1.7 5 0 8 0s5.5 1.7 7.7 5.25C13.5 8.8 11 10.5 8 10.5S2.5 8.8 0.3 5.25z" fill="#1a1a1a"/><circle cx="8" cy="5.25" r="3.5" fill="#fff"/><circle cx="8" cy="5.25" r="2.7" fill="#1a1a1a"/><circle cx="7.1" cy="4.4" r="1.1" fill="#fff"/></svg>
<div class="t hv" style="left:469.6px;top:306.2px;font-size:11.2px;color:#222">Não</div>
<div class="t hv" style="left:562.6px;top:306.6px;font-size:10.4px;color:#222;width:159.4px;overflow:hidden">FERNANDA DE OLIVEIRA CARDOSO</div>
<div class="a" style="left:78px;top:328px;width:644px;height:1px;background:#dedede"></div>
<div class="a" style="left:96px;top:338px;width:12px;height:12px;border:1.25px solid #606060;border-radius:2px"></div>
<svg class="a" style="left:130px;top:339.5px" width="16" height="11" viewBox="0 0 16 11"><path d="M0.3 5.25C2.5 1.7 5 0 8 0s5.5 1.7 7.7 5.25C13.5 8.8 11 10.5 8 10.5S2.5 8.8 0.3 5.25z" fill="#1a1a1a"/><circle cx="8" cy="5.25" r="3.5" fill="#fff"/><circle cx="8" cy="5.25" r="2.7" fill="#1a1a1a"/><circle cx="7.1" cy="4.4" r="1.1" fill="#fff"/></svg>
<div class="t hv" style="left:469.6px;top:337.2px;font-size:11.2px;color:#222">Não</div>
<div class="t hv" style="left:562.6px;top:337.6px;font-size:10.4px;color:#222;width:159.4px;overflow:hidden">ANTONIA RAQUEL RIBEIRO BOMFIM</div>
<div class="a" style="left:78px;top:359px;width:644px;height:1px;background:#dedede"></div>
<div class="a" style="left:96px;top:369px;width:12px;height:12px;border:1.25px solid #606060;border-radius:2px"></div>
<svg class="a" style="left:130px;top:370.5px" width="16" height="11" viewBox="0 0 16 11"><path d="M0.3 5.25C2.5 1.7 5 0 8 0s5.5 1.7 7.7 5.25C13.5 8.8 11 10.5 8 10.5S2.5 8.8 0.3 5.25z" fill="#1a1a1a"/><circle cx="8" cy="5.25" r="3.5" fill="#fff"/><circle cx="8" cy="5.25" r="2.7" fill="#1a1a1a"/><circle cx="7.1" cy="4.4" r="1.1" fill="#fff"/></svg>
<div class="t hv" style="left:469.6px;top:368.2px;font-size:11.2px;color:#222">Não</div>
<div class="t hv" style="left:562.6px;top:368.6px;font-size:10.4px;color:#222;width:159.4px;overflow:hidden">M IVONE ALVES DA ROCHA</div>
<div class="a" style="left:78px;top:390px;width:644px;height:1px;background:#dedede"></div>
<div class="a" style="left:96px;top:400px;width:12px;height:12px;border:1.25px solid #606060;border-radius:2px"></div>
<svg class="a" style="left:130px;top:401.5px" width="16" height="11" viewBox="0 0 16 11"><path d="M0.3 5.25C2.5 1.7 5 0 8 0s5.5 1.7 7.7 5.25C13.5 8.8 11 10.5 8 10.5S2.5 8.8 0.3 5.25z" fill="#1a1a1a"/><circle cx="8" cy="5.25" r="3.5" fill="#fff"/><circle cx="8" cy="5.25" r="2.7" fill="#1a1a1a"/><circle cx="7.1" cy="4.4" r="1.1" fill="#fff"/></svg>
<div class="t hv" style="left:469.6px;top:399.2px;font-size:11.2px;color:#222">Não</div>
<div class="t hv" style="left:562.6px;top:399.6px;font-size:10.4px;color:#222;width:159.4px;overflow:hidden">EDMUNDO LEITAO DO VALE</div>
<div class="a" style="left:78px;top:421px;width:644px;height:1px;background:#dedede"></div>

<!-- scrollbar -->
<div class="a" style="left:78px;top:440px;width:644px;height:17px;background:#f1f1f1"></div>
<div class="a" style="left:95.5px;top:442px;width:300px;height:12.5px;background:#c1c1c1"></div>
<svg class="a" style="left:83px;top:444px" width="6" height="9" viewBox="0 0 6 9"><path d="M5 0.5v8L0.5 4.5z" fill="#a3a3a3"/></svg>
<svg class="a" style="left:711px;top:444px" width="6" height="9" viewBox="0 0 6 9"><path d="M1 0.5v8l4.5-4z" fill="#505050"/></svg>
<div class="t b" style="left:79px;top:469px;font-size:11px;color:#222">Pré-cargas selecionadas</div>
<div class="a" style="left:571px;top:463px;width:72px;height:27px;background:#fff;border-radius:4px;box-shadow:0 1px 3px rgba(0,0,0,.3)"></div>
<svg class="a" style="left:599px;top:469px" width="16" height="13" viewBox="0 0 16 13"><g fill="#222"><circle cx="5.5" cy="7" r="3.6"/><g stroke="#222" stroke-width="2.2"><path d="M5.5 1.8v10.4M0.3 7h10.4M1.8 3.3l7.4 7.4M9.2 3.3l-7.4 7.4"/></g></g><circle cx="5.5" cy="7" r="1.5" fill="#fff"/><circle cx="12.5" cy="3" r="2" fill="none" stroke="#222" stroke-width="1.3"/><circle cx="12.5" cy="10" r="2" fill="none" stroke="#222" stroke-width="1.3"/></svg>
<div class="a" style="left:651px;top:463px;width:67px;height:27px;background:#fff;border-radius:4px;box-shadow:0 1px 3px rgba(0,0,0,.3)"></div>
<div class="t hv" style="left:663px;top:469px;font-size:10.8px;color:#222">Ações</div>
<svg class="a" style="left:697px;top:471px" width="10" height="7" viewBox="0 0 10 7"><path d="M0.8 6L5 1.5 9.2 6" fill="none" stroke="#444" stroke-width="0.95"/></svg>
<svg class="a" style="left:731px;top:492px" width="8" height="8" viewBox="0 0 8 8"><path d="M1 7.5L7.5 1M4 7.5L7.5 4" stroke="#666" stroke-width="0.9"/></svg>

<!-- side tabs -->
<div class="a" style="left:60px;top:336px;width:13px;height:22px;background:#3355a8"></div>
<svg class="a" style="left:63px;top:340.5px" width="7" height="9" viewBox="0 0 7 9"><path d="M5 1L1.8 4.5 5 8" fill="none" stroke="#fff" stroke-width="1.8"/></svg>

<!-- <div class="t b" style="left:77.7px;top:536px;font-size:10.6px;color:#5b892b;-webkit-text-stroke:0.2px #5b892b">3650.85&nbsp; Kg</div>
<div class="t b" style="left:151.8px;top:536px;font-size:10.6px;color:#5b892b;-webkit-text-stroke:0.2px #5b892b">0&nbsp; M²</div>
<div class="t b" style="left:197.4px;top:536px;font-size:10.6px;color:#5b892b;-webkit-text-stroke:0.2px #5b892b">21</div>
<div class="t b" style="left:233.4px;top:536px;font-size:10.6px;color:#5b892b;-webkit-text-stroke:0.2px #5b892b">16</div>
<div class="t b" style="left:262.4px;top:536px;font-size:10.6px;letter-spacing:0.7px;color:#5b892b;-webkit-text-stroke:0.2px #5b892b">134</div>
<div class="t b" style="left:300.5px;top:536px;font-size:10.6px;letter-spacing:-0.4px;color:#5b892b;-webkit-text-stroke:0.2px #5b892b">R$ 39.971,01</div>
<div class="t b" style="left:376.3px;top:536px;font-size:10.6px;color:#5b892b;-webkit-text-stroke:0.2px #5b892b">R$ 0,00</div>
<div class="t b" style="left:430.8px;top:536px;font-size:10.6px;letter-spacing:0.55px;color:#5b892b;-webkit-text-stroke:0.2px #5b892b">0.00%</div>
<div class="a" style="left:75px;top:552px;width:59.5px;height:1px;background:#e6e6e6"></div>
<div class="a" style="left:150px;top:552px;width:27px;height:1px;background:#e6e6e6"></div>
<div class="a" style="left:191px;top:552px;width:21px;height:1px;background:#e6e6e6"></div>
<div class="a" style="left:227px;top:552px;width:21px;height:1px;background:#e6e6e6"></div>
<div class="a" style="left:262px;top:552px;width:21px;height:1px;background:#e6e6e6"></div>
<div class="a" style="left:298px;top:552px;width:61px;height:1px;background:#e6e6e6"></div>
<div class="a" style="left:374px;top:552px;width:40px;height:1px;background:#e6e6e6"></div>
<div class="a" style="left:429px;top:552px;width:35px;height:1px;background:#e6e6e6"></div>
 CARD -->
<div class="a" style="left:60px;top:509px;width:418px;height:52px;background:#fff;border-radius:0 5px 5px 0;box-shadow:1px 1px 2px rgba(0,0,0,.22)"></div>
<div class="a" style="left:60px;top:526px;width:13px;height:22px;background:#3355a8"></div>
<svg class="a" style="left:63px;top:532px" width="7" height="9" viewBox="0 0 7 9"><path d="M5 1L1.8 4.5 5 8" fill="none" stroke="#fff" stroke-width="1.8"/></svg>
<div class="t b" style="left:77.7px;top:536px;font-size:10.6px;color:#5b892b;-webkit-text-stroke:0.2px #5b892b">3650.85&nbsp; Kg</div>
<div class="t b" style="left:151.8px;top:536px;font-size:10.6px;color:#5b892b;-webkit-text-stroke:0.2px #5b892b">0&nbsp; M²</div>
<div class="t b" style="left:197.4px;top:536px;font-size:10.6px;color:#5b892b;-webkit-text-stroke:0.2px #5b892b">21</div>
<div class="t b" style="left:233.4px;top:536px;font-size:10.6px;color:#5b892b;-webkit-text-stroke:0.2px #5b892b">16</div>
<div class="t b" style="left:262.4px;top:536px;font-size:10.6px;letter-spacing:0.7px;color:#5b892b;-webkit-text-stroke:0.2px #5b892b">134</div>
<div class="t b" style="left:300.5px;top:536px;font-size:10.6px;letter-spacing:-0.4px;color:#5b892b;-webkit-text-stroke:0.2px #5b892b">R$ 39.971,01</div>
<div class="t b" style="left:376.3px;top:536px;font-size:10.6px;color:#5b892b;-webkit-text-stroke:0.2px #5b892b">R$ 0,00</div>
<div class="t b" style="left:430.8px;top:536px;font-size:10.6px;letter-spacing:0.55px;color:#5b892b;-webkit-text-stroke:0.2px #5b892b">0.00%</div>
<div class="a" style="left:75px;top:552px;width:59.5px;height:1px;background:#e6e6e6"></div>
<div class="a" style="left:150px;top:552px;width:27px;height:1px;background:#e6e6e6"></div>
<div class="a" style="left:191px;top:552px;width:21px;height:1px;background:#e6e6e6"></div>
<div class="a" style="left:227px;top:552px;width:21px;height:1px;background:#e6e6e6"></div>
<div class="a" style="left:262px;top:552px;width:21px;height:1px;background:#e6e6e6"></div>
<div class="a" style="left:298px;top:552px;width:61px;height:1px;background:#e6e6e6"></div>
<div class="a" style="left:374px;top:552px;width:40px;height:1px;background:#e6e6e6"></div>
<div class="a" style="left:429px;top:552px;width:35px;height:1px;background:#e6e6e6"></div>



<!-- MAP OVERLAYS -->
<div class="t" style="left:69.3px;top:571.2px;font-size:14.6px;letter-spacing:-0.4px;-webkit-text-stroke:0.35px;text-shadow:0 0 1.5px #fff,0 0 1.5px #fff,0 0 1px #fff"><span style="color:#4285f4;-webkit-text-stroke-color:#4285f4">G</span><span style="color:#ea4335;-webkit-text-stroke-color:#ea4335">o</span><span style="color:#fbbc05;-webkit-text-stroke-color:#fbbc05">o</span><span style="color:#4285f4;-webkit-text-stroke-color:#4285f4">g</span><span style="color:#34a853;-webkit-text-stroke-color:#34a853">l</span><span style="color:#ea4335;-webkit-text-stroke-color:#ea4335">e</span></div>
<div class="a" style="left:995px;top:580px;width:326px;height:10px;background:rgba(255,255,255,.72)"></div>
<div class="t" style="left:998.6px;top:580.6px;font-size:7.8px;letter-spacing:-0.1px;color:#111">Atalhos do teclado</div>
<div class="t" style="left:1070px;top:580.6px;font-size:7.8px;letter-spacing:-0.2px;color:#111">Dados cartográficos ©2024 Google, INEGI, Inst. Geogr. Nacional</div>
<div class="a" style="left:656px;top:569px;width:72px;height:18px;background:#fff;border-radius:2px;box-shadow:0 1px 2px rgba(0,0,0,.25)"></div>
<div class="a" style="left:673px;top:571px;width:1px;height:14px;background:#eee"></div>
<div class="a" style="left:691px;top:571px;width:1px;height:14px;background:#eee"></div>
<div class="a" style="left:709px;top:571px;width:1px;height:14px;background:#eee"></div>
<svg class="a" style="left:659px;top:572px" width="12" height="12" viewBox="0 0 12 12"><path d="M3 11C2 9.5 1 8 1.5 6.5 2 5.5 3 6 3.5 7V2.5C3.5 1.5 5 1.5 5 2.5V5V1.5C5 0.5 6.5 0.5 6.5 1.5V5V2C6.5 1 8 1 8 2V5.5V3.5C8 2.5 9.5 2.5 9.5 3.5V8C9.5 9.5 9 10.5 8.5 11" fill="#fff" stroke="#222" stroke-width=".9"/></svg>
<svg class="a" style="left:676px;top:572px" width="13" height="12" viewBox="0 0 13 12"><path d="M1 1.5L5.5 6 11.5 4.5 10 9 3.5 10.5z" fill="#bbb" stroke="#999" stroke-width=".8"/></svg>
<div class="a" style="left:696.5px;top:574px;width:8.5px;height:8.5px;border-radius:50%;background:#bbb;border:0.8px solid #999"></div>
<div class="a" style="left:714.5px;top:573.7px;width:9px;height:9px;background:#bbb;border:0.8px solid #999;border-radius:1px"></div>
<div class="a" style="left:741px;top:569px;width:17px;height:18px;background:#fdfbf7;border-radius:2px;box-shadow:0 1px 2px rgba(0,0,0,.25)"></div>
<svg class="a" style="left:742px;top:571px" width="15" height="14" viewBox="0 0 15 14"><g transform="rotate(-30 7.5 7)"><rect x="1" y="5" width="13" height="4.5" fill="#888"/><path d="M3 5v2M5 5v1.5M7 5v2M9 5v1.5M11 5v2" stroke="#fff" stroke-width=".6"/></g></svg>

<!-- STATS ICONS -->
<svg class="a" style="left:97px;top:516px" width="20" height="17" viewBox="0 0 20 17"><path d="M8 3.3a2 1.4 0 0 1 4 0" fill="none" stroke="#555" stroke-width=".9"/><path d="M5 3.5h10l3.8 12H1.2z" fill="#fff" stroke="#444" stroke-width="1"/><path d="M1.2 15.5h17.6" stroke="#444" stroke-width="1.3"/><path d="M7.8 6.5v5.5M7.8 9.5l2.5-3M8.8 8.6l1.8 3.4M11.5 9h2v3.5h-2" fill="none" stroke="#555" stroke-width=".8"/></svg>
<svg class="a" style="left:153px;top:517px" width="24" height="16" viewBox="0 0 24 16"><g stroke="#555" stroke-width=".9"><path d="M10 1.5l5-1.5 4 1.5v5.5l-4 1.5-5-1.5z" fill="#f5f5f5"/><path d="M15 3l4-1.5v5.5l-4 1.5z" fill="#666"/><path d="M1.5 8l5-1.5 4 1.5v6l-4 1.5-5-1.5z" fill="#fafafa"/><path d="M6.5 9.5l4-1.5v6l-4 1.5z" fill="#666"/><path d="M12 8.5l4-1.5 4 1.5v6l-4 1.5-4-1.5z" fill="#fafafa"/><path d="M16 10l4-1.5v6l-4 1.5z" fill="#666"/></g></svg>
<svg class="a" style="left:439px;top:519px" width="17" height="15" viewBox="0 0 17 15"><circle cx="8.5" cy="7.5" r="6.6" fill="#fff" stroke="#777" stroke-width="1"/><circle cx="8.5" cy="7.5" r="4.8" fill="none" stroke="#777" stroke-width=".8"/><text x="8.5" y="10.3" text-anchor="middle" font-family="Liberation Sans" font-size="7" fill="#666">$</text></svg>
<svg class="a" style="left:190px;top:528px" width="220" height="8" viewBox="190 528 220 8"><path d="M194.5 531.5h15.5v1.6h-15.5z" fill="#444"/><path d="M265 531.5v2.2h13l4-2.2" fill="none" stroke="#777" stroke-width=".9"/><circle cx="268" cy="533" r="1" fill="none" stroke="#777" stroke-width=".6"/><circle cx="276" cy="533" r="1" fill="none" stroke="#777" stroke-width=".6"/><path d="M321 531l15 1.5-1 1.5z" fill="#888"/><path d="M390 531.2a6.5 3 0 0 0 12 0" fill="none" stroke="#888" stroke-width=".9"/></svg>
<!-- POPUP -->
<div class="a" style="left:168px;top:297px;width:263px;height:234px;background:#fff;border-radius:4px;box-shadow:0 2px 6px rgba(0,0,0,.25)"></div>
<div class="t hv" style="left:260.8px;top:307.7px;font-size:11.2px;color:#333">Ordenar coluna</div>
<svg class="a" style="left:193px;top:360px" width="13" height="12" viewBox="0 0 13 12"><circle cx="5" cy="5" r="3.7" fill="none" stroke="#222" stroke-width="1.8"/><path d="M7.6 7.6L11.2 11.2" stroke="#222" stroke-width="2.2" stroke-linecap="round"/></svg>
<div class="t" style="left:209px;top:360.8px;font-size:9.5px;color:#9a9a9a">Pesquise...</div>
<div class="a" style="left:194px;top:376.5px;width:210px;height:1px;background:#7a7a7a"></div>
<div class="t b" style="left:267px;top:397.5px;font-size:10.4px;color:#858585">Marcar todos</div>
<div class="a" style="left:176px;top:421px;width:11.5px;height:11.5px;border:1.2px solid #555;border-radius:1px"></div>
<div class="t hv" style="left:193.8px;top:420.6px;font-size:10px;letter-spacing:-0.55px;color:#222">9999980441</div>
<div class="a" style="left:176px;top:439px;width:11.5px;height:11.5px;border:1.2px solid #555;border-radius:1px"></div>
<div class="t hv" style="left:193.8px;top:438.6px;font-size:10px;letter-spacing:-0.55px;color:#222">9999980465</div>
<div class="a" style="left:176px;top:457px;width:11.5px;height:11.5px;border:1.2px solid #555;border-radius:1px"></div>
<div class="t hv" style="left:193.8px;top:456.6px;font-size:10px;letter-spacing:-0.55px;color:#222">9999980442</div>
<div class="a" style="left:176px;top:475px;width:11.5px;height:11.5px;border:1.2px solid #555;border-radius:1px"></div>
<div class="t hv" style="left:193.8px;top:474.6px;font-size:10px;letter-spacing:-0.55px;color:#222">9999980446</div>

<div class="a" style="left:168px;top:504px;width:263px;height:27px;background:#3355a8;border-radius:0 0 4px 4px"></div>
<div class="t b" style="left:284.9px;top:511.4px;font-size:10.4px;color:#fff">Filtrar</div>


<!-- HEADER ICONS -->
<svg class="a" style="left:1206px;top:-4px" width="14" height="13" viewBox="0 0 14 13"><path d="M7 0C4.2 0 2.8 2 2.8 4.5v3L1.2 9.6v0.9h11.6V9.6L11.2 7.5v-3C11.2 2 9.8 0 7 0z" fill="#7a7a7a"/><ellipse cx="7" cy="11.3" rx="1.6" ry="1" fill="#7a7a7a"/></svg>
<div class="a" style="left:1214px;top:-8.5px;width:14px;height:14px;border-radius:50%;background:#c9382c"></div>
<svg class="a" style="left:1236px;top:-3px" width="10" height="10" viewBox="0 0 10 10"><path d="M1 4.5L5 1l4 3.5V9H1z" fill="none" stroke="#777" stroke-width="1.1"/><path d="M3.5 9V6.5h3V9" fill="none" stroke="#777" stroke-width="1"/></svg>
<svg class="a" style="left:1264px;top:-3px" width="10" height="10" viewBox="0 0 10 10"><path d="M1.2 8.8L1.8 6.5 7.5 0.8 9.2 2.5 3.5 8.2z" fill="none" stroke="#777" stroke-width="1.1"/></svg>
<svg class="a" style="left:1291px;top:-4px" width="11" height="11" viewBox="0 0 11 11"><circle cx="5.5" cy="5.5" r="3.6" fill="none" stroke="#777" stroke-width="1.3" stroke-dasharray="2 1"/><circle cx="5.5" cy="5.5" r="1.5" fill="none" stroke="#777" stroke-width="1"/></svg>
<div class="t b" style="left:1251px;top:16.5px;font-size:8.8px;color:#a8a8a8">N</div>

<!-- SIDEBAR ICONS -->
<svg class="a" style="left:14px;top:77px" width="13" height="11" viewBox="0 0 13 11"><path d="M1.2 2l3.3-1 4 1 3.3-1v8.5l-3.3 1-4-1-3.3 1z M4.5 1v8.5 M8.5 2v8.5" fill="none" stroke="#3a4a9a" stroke-width="1.05"/></svg>
<svg class="a" style="left:14px;top:109px" width="13" height="13" viewBox="0 0 13 13"><circle cx="7.5" cy="5.5" r="4" fill="none" stroke="#8e9ac6" stroke-width="1.1"/><path d="M4.6 8.4L1 12" stroke="#b59aa8" stroke-width="1.2"/></svg>
<svg class="a" style="left:14px;top:142px" width="13" height="13" viewBox="0 0 13 13"><path d="M1 12.3h11M2.5 12V6M4.5 12V2M6.5 12V4M8.5 12V7M10.5 12V8" stroke="#9aa3cc" stroke-width="1.3"/></svg>
<svg class="a" style="left:14px;top:175px" width="13" height="13" viewBox="0 0 13 13"><path d="M1.5 0.5v12M1.5 3.5h10M1.5 6.5h10M1.5 9.5h10" stroke="#9aa3cc" stroke-width="1"/><circle cx="6" cy="6.5" r="1.2" fill="#fff" stroke="#9aa3cc"/><circle cx="9" cy="3.5" r="1.2" fill="#fff" stroke="#9aa3cc"/><circle cx="4" cy="9.5" r="1.2" fill="#fff" stroke="#9aa3cc"/></svg>
<svg class="a" style="left:14px;top:208px" width="13" height="13" viewBox="0 0 13 13"><path d="M9 3H1.5v9h9V6" fill="none" stroke="#9aa3cc" stroke-width="1.2"/><path d="M5 8.5l0.5-2L11 1l1.3 1.3L6.8 8z" fill="none" stroke="#8a94c4" stroke-width="1.1"/></svg>
<svg class="a" style="left:15px;top:241px" width="11" height="13" viewBox="0 0 11 13"><path d="M1 1h6l3 3v8H1z" fill="none" stroke="#9aa3cc" stroke-width="1.1"/><path d="M4 6l-1.3 1.5L4 9M7 6l1.3 1.5L7 9M5.8 5.5l-0.6 4.5" stroke="#9aa3cc" stroke-width=".8" fill="none"/></svg>
<svg class="a" style="left:15px;top:275px" width="11" height="12" viewBox="0 0 11 12"><circle cx="5.5" cy="4" r="3" fill="none" stroke="#9aa3cc" stroke-width="1.2"/><path d="M5.5 7v5" stroke="#9aa3cc" stroke-width="1.2"/></svg>
<svg class="a" style="left:14px;top:308px" width="13" height="13" viewBox="0 0 13 13"><path d="M1 12L8 5M6.5 3.5l3 3M7.5 2.5L10.5 0.5 12.5 2.5 10.5 5.5" fill="none" stroke="#8a94c4" stroke-width="1.5"/><path d="M9 10.5l2 1" stroke="#b0a0b0" stroke-width="1"/></svg>

<!-- GREEN BAR ICONS -->
<svg class="a" style="left:186px;top:54px" width="14" height="13" viewBox="0 0 14 13"><path d="M1.5 6.5L7 1.5l5.5 5M3 5.3V12h8V5.3M5.6 12V8.3h2.8V12" fill="none" stroke="#fff" stroke-width="1.4" stroke-linejoin="round"/></svg>
<div class="a" style="left:1285px;top:48px;width:27px;height:27px;border-radius:50%;background:#fff"></div>
<div class="a" style="left:1297px;top:55px;width:3.2px;height:6.6px;background:#5d7f30;border-radius:1px 1px 1.5px 1.5px"></div>
<div class="a" style="left:1297px;top:62.8px;width:3.3px;height:3.3px;background:#5d7f30;border-radius:50%"></div>

<!-- <div class="a" style="left:1288px;top:355px;width:30px;height:30px;border-radius:50%;background:#3355a8;box-shadow:0 2px 4px rgba(0,0,0,.3)"></div>
<svg class="a" style="left:1296px;top:362px" width="14" height="16" viewBox="0 0 14 16"><path d="M7 14.5C4 11 1.8 8.5 1.8 6.2A5.2 5.2 0 0 1 12.2 6.2C12.2 8.5 10 11 7 14.5z" fill="none" stroke="#fff" stroke-width="1.4"/><path d="M7 3.5v3.5" stroke="#fff" stroke-width="1.5"/><circle cx="7" cy="8.8" r=".9" fill="#fff"/></svg>
<div class="a" style="left:1288px;top:397.5px;width:30px;height:30px;border-radius:50%;background:#3355a8;box-shadow:0 2px 4px rgba(0,0,0,.3)"></div>
<svg class="a" style="left:1295px;top:406.5px" width="16" height="12" viewBox="0 0 16 12"><rect x="1" y="1" width="14" height="10" fill="none" stroke="#fff" stroke-width="1.2" stroke-dasharray="1.5 1"/><rect x="1" y="1" width="14" height="2.5" fill="#fff"/><rect x="10" y="1" width="5" height="4" fill="#fff"/></svg>
<div class="a" style="left:1288px;top:440px;width:30px;height:30px;border-radius:50%;background:#3355a8;box-shadow:0 2px 4px rgba(0,0,0,.3)"></div>
<svg class="a" style="left:1296px;top:448px" width="14" height="14" viewBox="0 0 14 14"><path d="M1.5 1.5h11v8H4.5l-3 3z" fill="#fff"/><path d="M4 4.2h6M4 6.6h4.5" stroke="#3355a8" stroke-width="1.1"/></svg>
<div class="a" style="left:1288px;top:483px;width:30px;height:30px;border-radius:50%;background:#658535;box-shadow:0 2px 4px rgba(0,0,0,.3)"></div>
<svg class="a" style="left:1296px;top:492px" width="14" height="12" viewBox="0 0 14 12"><path d="M1 2h12M1 6h12M1 10h12" stroke="#fff" stroke-width="1.6"/></svg>
<div class="a" style="left:1288px;top:525.5px;width:30px;height:30px;border-radius:50%;background:#3355a8;box-shadow:0 2px 4px rgba(0,0,0,.3)"></div>
<svg class="a" style="left:1296px;top:534.5px" width="14" height="12" viewBox="0 0 14 12"><path d="M1 1.5h12M3.5 5.5h7M5.5 9.5h3" stroke="#fff" stroke-width="1.8"/></svg>
<div class="a" style="left:1282px;top:572px;width:42px;height:42px;border-radius:50%;background:#3355a8;box-shadow:0 2px 5px rgba(0,0,0,.35)"></div>
<svg class="a" style="left:1297px;top:589px" width="12" height="8" viewBox="0 0 12 8"><path d="M1.5 1.5L6 6l4.5-4.5" fill="none" stroke="#fff" stroke-width="2"/></svg>
<div class="a" style="left:1310.1px;top:345.5px;width:17px;height:17px;border-radius:50%;background:#ee3d7e"></div>
<div class="t b" style="left:1309.6px;top:349px;width:18px;text-align:center;font-size:9px;letter-spacing:-0.6px;color:#fff">143</div>
<div class="a" style="left:1309.6px;top:473.8px;width:17px;height:17px;border-radius:50%;background:#ee3d7e"></div>
<div class="t b" style="left:1309.1px;top:477.3px;width:18px;text-align:center;font-size:9px;letter-spacing:-0.6px;color:#fff">145</div>
ING BUTTONS -->
<div class="a" style="left:1288px;top:355px;width:30px;height:30px;border-radius:50%;background:#3355a8;box-shadow:0 2px 4px rgba(0,0,0,.3)"></div>
<svg class="a" style="left:1296px;top:362px" width="14" height="16" viewBox="0 0 14 16"><path d="M7 14.5C4 11 1.8 8.5 1.8 6.2A5.2 5.2 0 0 1 12.2 6.2C12.2 8.5 10 11 7 14.5z" fill="none" stroke="#fff" stroke-width="1.4"/><path d="M7 3.5v3.5" stroke="#fff" stroke-width="1.5"/><circle cx="7" cy="8.8" r=".9" fill="#fff"/></svg>
<div class="a" style="left:1288px;top:397.5px;width:30px;height:30px;border-radius:50%;background:#3355a8;box-shadow:0 2px 4px rgba(0,0,0,.3)"></div>
<svg class="a" style="left:1295px;top:406.5px" width="16" height="12" viewBox="0 0 16 12"><rect x="1" y="1" width="14" height="10" fill="none" stroke="#fff" stroke-width="1.2" stroke-dasharray="1.5 1"/><rect x="1" y="1" width="14" height="2.5" fill="#fff"/><rect x="10" y="1" width="5" height="4" fill="#fff"/></svg>
<div class="a" style="left:1288px;top:440px;width:30px;height:30px;border-radius:50%;background:#3355a8;box-shadow:0 2px 4px rgba(0,0,0,.3)"></div>
<svg class="a" style="left:1296px;top:448px" width="14" height="14" viewBox="0 0 14 14"><path d="M1.5 1.5h11v8H4.5l-3 3z" fill="#fff"/><path d="M4 4.2h6M4 6.6h4.5" stroke="#3355a8" stroke-width="1.1"/></svg>
<div class="a" style="left:1288px;top:483px;width:30px;height:30px;border-radius:50%;background:#658535;box-shadow:0 2px 4px rgba(0,0,0,.3)"></div>
<svg class="a" style="left:1296px;top:492px" width="14" height="12" viewBox="0 0 14 12"><path d="M1 2h12M1 6h12M1 10h12" stroke="#fff" stroke-width="1.6"/></svg>
<div class="a" style="left:1288px;top:525.5px;width:30px;height:30px;border-radius:50%;background:#3355a8;box-shadow:0 2px 4px rgba(0,0,0,.3)"></div>
<svg class="a" style="left:1296px;top:534.5px" width="14" height="12" viewBox="0 0 14 12"><path d="M1 1.5h12M3.5 5.5h7M5.5 9.5h3" stroke="#fff" stroke-width="1.8"/></svg>
<div class="a" style="left:1282px;top:572px;width:42px;height:42px;border-radius:50%;background:#3355a8;box-shadow:0 2px 5px rgba(0,0,0,.35)"></div>
<svg class="a" style="left:1297px;top:589px" width="12" height="8" viewBox="0 0 12 8"><path d="M1.5 1.5L6 6l4.5-4.5" fill="none" stroke="#fff" stroke-width="2"/></svg>
<div class="a" style="left:1310.1px;top:345.5px;width:17px;height:17px;border-radius:50%;background:#ee3d7e"></div>
<div class="t b" style="left:1309.6px;top:349px;width:18px;text-align:center;font-size:9px;letter-spacing:-0.6px;color:#fff">143</div>
<div class="a" style="left:1309.6px;top:473.8px;width:17px;height:17px;border-radius:50%;background:#ee3d7e"></div>
<div class="t b" style="left:1309.1px;top:477.3px;width:18px;text-align:center;font-size:9px;letter-spacing:-0.6px;color:#fff">145</div>


</body></html>
